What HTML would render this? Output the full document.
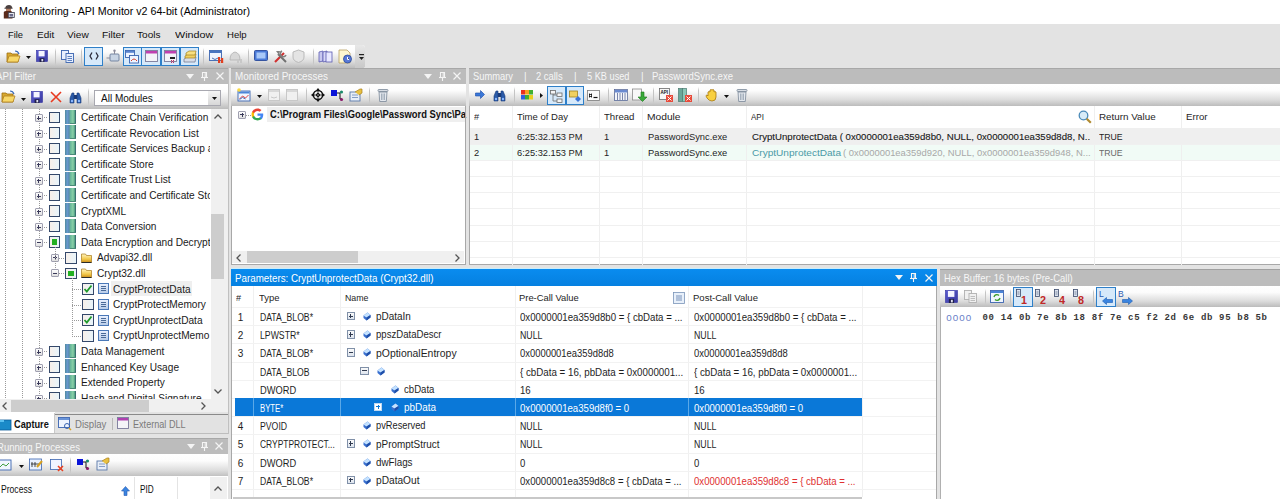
<!DOCTYPE html><html><head><meta charset="utf-8"><style>
html,body{margin:0;padding:0;width:1280px;height:499px;overflow:hidden;background:#e3e3e3;position:relative}
div{position:absolute}
.t{position:absolute;white-space:nowrap;transform-origin:0 0;font-family:"Liberation Sans",sans-serif}
svg{position:absolute;overflow:visible}
</style></head><body>
<div style="left:0px;top:0px;width:1280px;height:24px;background:#fff"></div>
<div class="t" style="left:18.7px;top:5.99px;font-size:11px;line-height:11px;color:#000;font-family:'Liberation Sans',sans-serif;transform:scaleX(0.9689);">Monitoring - API Monitor v2 64-bit (Administrator)</div>
<div style="left:0px;top:24px;width:1280px;height:44px;background:#e3e3e3"></div>
<div class="t" style="left:8.1px;top:30.10px;font-size:9.8px;line-height:9.8px;color:#111;font-family:'Liberation Sans',sans-serif;transform:scaleX(0.9499);">File</div>
<div class="t" style="left:36.6px;top:30.10px;font-size:9.8px;line-height:9.8px;color:#111;font-family:'Liberation Sans',sans-serif;transform:scaleX(1.0186);">Edit</div>
<div class="t" style="left:67px;top:30.10px;font-size:9.8px;line-height:9.8px;color:#111;font-family:'Liberation Sans',sans-serif;transform:scaleX(1.0349);">View</div>
<div class="t" style="left:101.6px;top:30.10px;font-size:9.8px;line-height:9.8px;color:#111;font-family:'Liberation Sans',sans-serif;transform:scaleX(1.0424);">Filter</div>
<div class="t" style="left:137px;top:30.10px;font-size:9.8px;line-height:9.8px;color:#111;font-family:'Liberation Sans',sans-serif;transform:scaleX(1.0272);">Tools</div>
<div class="t" style="left:174.7px;top:30.10px;font-size:9.8px;line-height:9.8px;color:#111;font-family:'Liberation Sans',sans-serif;transform:scaleX(1.0988);">Window</div>
<div class="t" style="left:226.5px;top:30.10px;font-size:9.8px;line-height:9.8px;color:#111;font-family:'Liberation Sans',sans-serif;transform:scaleX(0.9774);">Help</div>
<div style="left:0px;top:44.5px;width:364.5px;height:23px;background:linear-gradient(#ffffff,#fcfcfc 30%,#dcdcdc 72%,#bcbcbc);border-radius:0 3px 3px 0"></div>
<div style="left:355px;top:44.5px;width:9.5px;height:23px;background:linear-gradient(#e8e8e8,#c8c8c8);border-radius:0 3px 3px 0"></div>
<div style="left:0px;top:68px;width:228px;height:16px;background:#bcbcbc"></div>
<div class="t" style="left:-4px;top:71.13px;font-size:10.6px;line-height:10.6px;color:#f6f6f6;font-family:'Liberation Sans',sans-serif;transform:scaleX(0.9177);">API Filter</div>
<div style="left:0px;top:67.5px;width:228px;height:1px;background:#a8a8a8"></div>
<div style="left:0px;top:84px;width:228px;height:25px;background:linear-gradient(#ffffff,#fcfcfc 30%,#dcdcdc 72%,#bcbcbc)"></div>
<div style="left:0px;top:109px;width:210.5px;height:290px;background:#fff"></div>
<div style="left:210.5px;top:109px;width:17px;height:290px;background:#f0f0f0"></div>
<div style="left:211.3px;top:213.6px;width:12.5px;height:65px;background:#cdcdcd"></div>
<div style="left:227.5px;top:68px;width:1px;height:366px;background:#c0c0c0"></div>
<div style="left:0px;top:399px;width:210.5px;height:12.5px;background:#f0f0f0"></div>
<div style="left:11px;top:399.8px;width:137.5px;height:12px;background:#cdcdcd"></div>
<div style="left:210.5px;top:399px;width:17px;height:12.5px;background:#f0f0f0"></div>
<div style="left:0px;top:411.5px;width:228px;height:22px;background:#e4e4e4"></div>
<div style="left:0px;top:411.5px;width:55px;height:21px;background:#fff"></div>
<div style="left:0px;top:438.7px;width:228px;height:15px;background:#bcbcbc"></div>
<div class="t" style="left:-2.8px;top:441.53px;font-size:10.6px;line-height:10.6px;color:#f6f6f6;font-family:'Liberation Sans',sans-serif;transform:scaleX(0.9030);">Running Processes</div>
<div style="left:0px;top:438px;width:228px;height:1px;background:#a8a8a8"></div>
<div style="left:0px;top:453.7px;width:228px;height:23px;background:linear-gradient(#ffffff,#fcfcfc 30%,#dcdcdc 72%,#bcbcbc)"></div>
<div style="left:0px;top:476.4px;width:228px;height:23px;background:#fff"></div>
<div style="left:231px;top:68px;width:235px;height:16px;background:#bcbcbc"></div>
<div class="t" style="left:234.6px;top:71.13px;font-size:10.6px;line-height:10.6px;color:#f6f6f6;font-family:'Liberation Sans',sans-serif;transform:scaleX(0.9340);">Monitored Processes</div>
<div style="left:231px;top:67.5px;width:235px;height:1px;background:#a8a8a8"></div>
<div style="left:231px;top:84px;width:235px;height:22px;background:linear-gradient(#ffffff,#fcfcfc 30%,#dcdcdc 72%,#bcbcbc)"></div>
<div style="left:231px;top:106px;width:235px;height:159px;background:#fff;border-left:1px solid #a8a8a8;border-right:1px solid #a8a8a8;border-bottom:1px solid #a8a8a8;box-sizing:border-box"></div>
<div style="left:232px;top:250.8px;width:232px;height:12.6px;background:#f0f0f0"></div>
<div style="left:246.7px;top:250.8px;width:111.3px;height:12.6px;background:#cdcdcd"></div>
<div style="left:469px;top:68px;width:811px;height:16px;background:#bcbcbc"></div>
<div style="left:469px;top:67.5px;width:811px;height:1px;background:#a8a8a8"></div>
<div style="left:469px;top:84px;width:811px;height:22px;background:linear-gradient(#ffffff,#fcfcfc 30%,#dcdcdc 72%,#bcbcbc)"></div>
<div style="left:469px;top:106px;width:811px;height:159px;background:#fff;border-left:1px solid #a8a8a8;border-bottom:1px solid #a8a8a8;box-sizing:border-box"></div>
<div style="left:470px;top:128px;width:810px;height:16px;background:#efefef"></div>
<div style="left:470px;top:144px;width:810px;height:16px;background:#f1fbf6"></div>
<div style="left:231px;top:268px;width:706px;height:1px;background:#c8eefc"></div>
<div style="left:231px;top:269px;width:706px;height:16.5px;background:linear-gradient(#0a8cef,#0580e0)"></div>
<div class="t" style="left:235.2px;top:272.83px;font-size:10.6px;line-height:10.6px;color:#fff;font-family:'Liberation Sans',sans-serif;transform:scaleX(0.9232);">Parameters: CryptUnprotectData (Crypt32.dll)</div>
<div style="left:231px;top:285.5px;width:706px;height:213.5px;background:#fff;border-left:1px solid #a8a8a8;border-right:1px solid #a8a8a8;box-sizing:border-box"></div>
<div style="left:235.2px;top:398.6px;width:627px;height:18px;background:#0a78d8"></div>
<div style="left:233px;top:496.5px;width:629px;height:2.5px;background:#c8c8c8"></div>
<div style="left:940px;top:269.5px;width:340px;height:16px;background:#bcbcbc"></div>
<div class="t" style="left:944px;top:273.03px;font-size:10.6px;line-height:10.6px;color:#f6f6f6;font-family:'Liberation Sans',sans-serif;transform:scaleX(0.8936);">Hex Buffer: 16 bytes (Pre-Call)</div>
<div style="left:940px;top:269px;width:340px;height:1px;background:#a0a0a0"></div>
<div style="left:940px;top:285.6px;width:340px;height:21.5px;background:linear-gradient(#ffffff,#fcfcfc 30%,#dcdcdc 72%,#bcbcbc)"></div>
<div style="left:940px;top:307px;width:340px;height:192px;background:#fff;border-left:1px solid #b0b0b0;box-sizing:border-box"></div>
<div style="left:0;top:109px;width:210px;height:290px;overflow:hidden">
<div style="left:5px;top:0px;width:1px;height:290px;background:repeating-linear-gradient(#9a9a9a 0 1px,transparent 1px 2px)"></div>
<div style="left:22px;top:0px;width:1px;height:290px;background:repeating-linear-gradient(#9a9a9a 0 1px,transparent 1px 2px)"></div>
<div style="left:38.5px;top:0px;width:1px;height:290px;background:repeating-linear-gradient(#9a9a9a 0 1px,transparent 1px 2px)"></div>
<div style="left:110.5px;top:171.89999999999998px;width:81px;height:15px;background:#efefef"></div>
<div style="left:42px;top:8.299999999999997px;width:6px;height:1px;background:repeating-linear-gradient(90deg,#9a9a9a 0 1px,transparent 1px 2px)"></div>
<div style="left:34.9px;top:5.099999999999997px;width:8px;height:8px;background:linear-gradient(#fdfdfd,#e0e0e0);border:1px solid #a0a0b0;box-sizing:border-box;border-radius:1px"></div>
<div style="left:36.9px;top:8.599999999999998px;width:4px;height:1px;background:#3a3a5a"></div>
<div style="left:38.4px;top:7.099999999999997px;width:1px;height:4px;background:#3a3a5a"></div>
<div style="left:48.7px;top:2.599999999999997px;width:11.5px;height:11.5px;background:linear-gradient(90deg,#f8f0ea,#e8f4fa);border:1.2px solid #34486a;box-sizing:border-box"></div>
<div style="left:65px;top:0.7999999999999972px;width:10.8px;height:14px;background:linear-gradient(90deg,#4f8a9a,#6a9ad0 22%,#5a8ab0 40%,#6ab89a 55%,#8ad0a8 80%,#4a9a80);border-right:1px solid #3a7070;box-sizing:border-box"></div>
<div style="left:70px;top:13.799999999999997px;width:5.8px;height:1px;background:#4a8a78"></div>
<div class="t" style="left:80.6px;top:2.91px;font-size:10.5px;line-height:10.5px;color:#1a1a1a;font-family:'Liberation Sans',sans-serif;transform:scaleX(0.965);">Certificate Chain Verification</div>
<div style="left:42px;top:23.900000000000006px;width:6px;height:1px;background:repeating-linear-gradient(90deg,#9a9a9a 0 1px,transparent 1px 2px)"></div>
<div style="left:34.9px;top:20.700000000000006px;width:8px;height:8px;background:linear-gradient(#fdfdfd,#e0e0e0);border:1px solid #a0a0b0;box-sizing:border-box;border-radius:1px"></div>
<div style="left:36.9px;top:24.200000000000006px;width:4px;height:1px;background:#3a3a5a"></div>
<div style="left:38.4px;top:22.700000000000006px;width:1px;height:4px;background:#3a3a5a"></div>
<div style="left:48.7px;top:18.200000000000006px;width:11.5px;height:11.5px;background:linear-gradient(90deg,#f8f0ea,#e8f4fa);border:1.2px solid #34486a;box-sizing:border-box"></div>
<div style="left:65px;top:16.400000000000006px;width:10.8px;height:14px;background:linear-gradient(90deg,#4f8a9a,#6a9ad0 22%,#5a8ab0 40%,#6ab89a 55%,#8ad0a8 80%,#4a9a80);border-right:1px solid #3a7070;box-sizing:border-box"></div>
<div style="left:70px;top:29.400000000000006px;width:5.8px;height:1px;background:#4a8a78"></div>
<div class="t" style="left:80.6px;top:18.51px;font-size:10.5px;line-height:10.5px;color:#1a1a1a;font-family:'Liberation Sans',sans-serif;transform:scaleX(0.965);">Certificate Revocation List</div>
<div style="left:42px;top:39.5px;width:6px;height:1px;background:repeating-linear-gradient(90deg,#9a9a9a 0 1px,transparent 1px 2px)"></div>
<div style="left:34.9px;top:36.3px;width:8px;height:8px;background:linear-gradient(#fdfdfd,#e0e0e0);border:1px solid #a0a0b0;box-sizing:border-box;border-radius:1px"></div>
<div style="left:36.9px;top:39.8px;width:4px;height:1px;background:#3a3a5a"></div>
<div style="left:38.4px;top:38.3px;width:1px;height:4px;background:#3a3a5a"></div>
<div style="left:48.7px;top:33.8px;width:11.5px;height:11.5px;background:linear-gradient(90deg,#f8f0ea,#e8f4fa);border:1.2px solid #34486a;box-sizing:border-box"></div>
<div style="left:65px;top:32.0px;width:10.8px;height:14px;background:linear-gradient(90deg,#4f8a9a,#6a9ad0 22%,#5a8ab0 40%,#6ab89a 55%,#8ad0a8 80%,#4a9a80);border-right:1px solid #3a7070;box-sizing:border-box"></div>
<div style="left:70px;top:45.0px;width:5.8px;height:1px;background:#4a8a78"></div>
<div class="t" style="left:80.6px;top:34.11px;font-size:10.5px;line-height:10.5px;color:#1a1a1a;font-family:'Liberation Sans',sans-serif;transform:scaleX(0.965);">Certificate Services Backup an</div>
<div style="left:42px;top:55.099999999999994px;width:6px;height:1px;background:repeating-linear-gradient(90deg,#9a9a9a 0 1px,transparent 1px 2px)"></div>
<div style="left:34.9px;top:51.89999999999999px;width:8px;height:8px;background:linear-gradient(#fdfdfd,#e0e0e0);border:1px solid #a0a0b0;box-sizing:border-box;border-radius:1px"></div>
<div style="left:36.9px;top:55.39999999999999px;width:4px;height:1px;background:#3a3a5a"></div>
<div style="left:38.4px;top:53.89999999999999px;width:1px;height:4px;background:#3a3a5a"></div>
<div style="left:48.7px;top:49.39999999999999px;width:11.5px;height:11.5px;background:linear-gradient(90deg,#f8f0ea,#e8f4fa);border:1.2px solid #34486a;box-sizing:border-box"></div>
<div style="left:65px;top:47.599999999999994px;width:10.8px;height:14px;background:linear-gradient(90deg,#4f8a9a,#6a9ad0 22%,#5a8ab0 40%,#6ab89a 55%,#8ad0a8 80%,#4a9a80);border-right:1px solid #3a7070;box-sizing:border-box"></div>
<div style="left:70px;top:60.599999999999994px;width:5.8px;height:1px;background:#4a8a78"></div>
<div class="t" style="left:80.6px;top:49.71px;font-size:10.5px;line-height:10.5px;color:#1a1a1a;font-family:'Liberation Sans',sans-serif;transform:scaleX(0.965);">Certificate Store</div>
<div style="left:42px;top:70.69999999999999px;width:6px;height:1px;background:repeating-linear-gradient(90deg,#9a9a9a 0 1px,transparent 1px 2px)"></div>
<div style="left:34.9px;top:67.49999999999999px;width:8px;height:8px;background:linear-gradient(#fdfdfd,#e0e0e0);border:1px solid #a0a0b0;box-sizing:border-box;border-radius:1px"></div>
<div style="left:36.9px;top:70.99999999999999px;width:4px;height:1px;background:#3a3a5a"></div>
<div style="left:38.4px;top:69.49999999999999px;width:1px;height:4px;background:#3a3a5a"></div>
<div style="left:48.7px;top:64.99999999999999px;width:11.5px;height:11.5px;background:linear-gradient(90deg,#f8f0ea,#e8f4fa);border:1.2px solid #34486a;box-sizing:border-box"></div>
<div style="left:65px;top:63.19999999999999px;width:10.8px;height:14px;background:linear-gradient(90deg,#4f8a9a,#6a9ad0 22%,#5a8ab0 40%,#6ab89a 55%,#8ad0a8 80%,#4a9a80);border-right:1px solid #3a7070;box-sizing:border-box"></div>
<div style="left:70px;top:76.19999999999999px;width:5.8px;height:1px;background:#4a8a78"></div>
<div class="t" style="left:80.6px;top:65.31px;font-size:10.5px;line-height:10.5px;color:#1a1a1a;font-family:'Liberation Sans',sans-serif;transform:scaleX(0.965);">Certificate Trust List</div>
<div style="left:42px;top:86.30000000000001px;width:6px;height:1px;background:repeating-linear-gradient(90deg,#9a9a9a 0 1px,transparent 1px 2px)"></div>
<div style="left:34.9px;top:83.10000000000001px;width:8px;height:8px;background:linear-gradient(#fdfdfd,#e0e0e0);border:1px solid #a0a0b0;box-sizing:border-box;border-radius:1px"></div>
<div style="left:36.9px;top:86.60000000000001px;width:4px;height:1px;background:#3a3a5a"></div>
<div style="left:38.4px;top:85.10000000000001px;width:1px;height:4px;background:#3a3a5a"></div>
<div style="left:48.7px;top:80.60000000000001px;width:11.5px;height:11.5px;background:linear-gradient(90deg,#f8f0ea,#e8f4fa);border:1.2px solid #34486a;box-sizing:border-box"></div>
<div style="left:65px;top:78.80000000000001px;width:10.8px;height:14px;background:linear-gradient(90deg,#4f8a9a,#6a9ad0 22%,#5a8ab0 40%,#6ab89a 55%,#8ad0a8 80%,#4a9a80);border-right:1px solid #3a7070;box-sizing:border-box"></div>
<div style="left:70px;top:91.80000000000001px;width:5.8px;height:1px;background:#4a8a78"></div>
<div class="t" style="left:80.6px;top:80.91px;font-size:10.5px;line-height:10.5px;color:#1a1a1a;font-family:'Liberation Sans',sans-serif;transform:scaleX(0.965);">Certificate and Certificate Sto</div>
<div style="left:42px;top:101.89999999999998px;width:6px;height:1px;background:repeating-linear-gradient(90deg,#9a9a9a 0 1px,transparent 1px 2px)"></div>
<div style="left:34.9px;top:98.69999999999997px;width:8px;height:8px;background:linear-gradient(#fdfdfd,#e0e0e0);border:1px solid #a0a0b0;box-sizing:border-box;border-radius:1px"></div>
<div style="left:36.9px;top:102.19999999999997px;width:4px;height:1px;background:#3a3a5a"></div>
<div style="left:38.4px;top:100.69999999999997px;width:1px;height:4px;background:#3a3a5a"></div>
<div style="left:48.7px;top:96.19999999999997px;width:11.5px;height:11.5px;background:linear-gradient(90deg,#f8f0ea,#e8f4fa);border:1.2px solid #34486a;box-sizing:border-box"></div>
<div style="left:65px;top:94.39999999999998px;width:10.8px;height:14px;background:linear-gradient(90deg,#4f8a9a,#6a9ad0 22%,#5a8ab0 40%,#6ab89a 55%,#8ad0a8 80%,#4a9a80);border-right:1px solid #3a7070;box-sizing:border-box"></div>
<div style="left:70px;top:107.39999999999998px;width:5.8px;height:1px;background:#4a8a78"></div>
<div class="t" style="left:80.6px;top:96.51px;font-size:10.5px;line-height:10.5px;color:#1a1a1a;font-family:'Liberation Sans',sans-serif;transform:scaleX(0.965);">CryptXML</div>
<div style="left:42px;top:117.5px;width:6px;height:1px;background:repeating-linear-gradient(90deg,#9a9a9a 0 1px,transparent 1px 2px)"></div>
<div style="left:34.9px;top:114.3px;width:8px;height:8px;background:linear-gradient(#fdfdfd,#e0e0e0);border:1px solid #a0a0b0;box-sizing:border-box;border-radius:1px"></div>
<div style="left:36.9px;top:117.8px;width:4px;height:1px;background:#3a3a5a"></div>
<div style="left:38.4px;top:116.3px;width:1px;height:4px;background:#3a3a5a"></div>
<div style="left:48.7px;top:111.8px;width:11.5px;height:11.5px;background:linear-gradient(90deg,#f8f0ea,#e8f4fa);border:1.2px solid #34486a;box-sizing:border-box"></div>
<div style="left:65px;top:110.0px;width:10.8px;height:14px;background:linear-gradient(90deg,#4f8a9a,#6a9ad0 22%,#5a8ab0 40%,#6ab89a 55%,#8ad0a8 80%,#4a9a80);border-right:1px solid #3a7070;box-sizing:border-box"></div>
<div style="left:70px;top:123.0px;width:5.8px;height:1px;background:#4a8a78"></div>
<div class="t" style="left:80.6px;top:112.11px;font-size:10.5px;line-height:10.5px;color:#1a1a1a;font-family:'Liberation Sans',sans-serif;transform:scaleX(0.965);">Data Conversion</div>
<div style="left:42px;top:133.1px;width:6px;height:1px;background:repeating-linear-gradient(90deg,#9a9a9a 0 1px,transparent 1px 2px)"></div>
<div style="left:34.9px;top:129.9px;width:8px;height:8px;background:linear-gradient(#fdfdfd,#e0e0e0);border:1px solid #a0a0b0;box-sizing:border-box;border-radius:1px"></div>
<div style="left:36.9px;top:133.4px;width:4px;height:1px;background:#3a3a5a"></div>
<div style="left:48.7px;top:127.39999999999999px;width:11.5px;height:11.5px;background:linear-gradient(90deg,#f8f0ea,#e8f4fa);border:1.2px solid #34486a;box-sizing:border-box"></div>
<div style="left:51.7px;top:130.39999999999998px;width:5.5px;height:5.5px;background:#22b022"></div>
<div style="left:65px;top:125.6px;width:10.8px;height:14px;background:linear-gradient(90deg,#4f8a9a,#6a9ad0 22%,#5a8ab0 40%,#6ab89a 55%,#8ad0a8 80%,#4a9a80);border-right:1px solid #3a7070;box-sizing:border-box"></div>
<div style="left:70px;top:138.6px;width:5.8px;height:1px;background:#4a8a78"></div>
<div class="t" style="left:80.6px;top:127.71px;font-size:10.5px;line-height:10.5px;color:#1a1a1a;font-family:'Liberation Sans',sans-serif;transform:scaleX(0.965);">Data Encryption and Decrypti</div>
<div style="left:59px;top:148.7px;width:6px;height:1px;background:repeating-linear-gradient(90deg,#9a9a9a 0 1px,transparent 1px 2px)"></div>
<div style="left:51px;top:144.7px;width:8px;height:8px;background:linear-gradient(#fdfdfd,#e0e0e0);border:1px solid #a0a0b0;box-sizing:border-box;border-radius:1px"></div>
<div style="left:53px;top:148.2px;width:4px;height:1px;background:#3a3a5a"></div>
<div style="left:54.5px;top:146.7px;width:1px;height:4px;background:#3a3a5a"></div>
<div style="left:65px;top:143.0px;width:11.5px;height:11.5px;background:linear-gradient(90deg,#f8f0ea,#e8f4fa);border:1.2px solid #34486a;box-sizing:border-box"></div>
<svg style="left:81px;top:142.7px" width="11" height="11" viewBox="0 0 11 11"><defs><linearGradient id="fo" x1="0" y1="0" x2="0" y2="1"><stop offset="0" stop-color="#fff4c0"/><stop offset=".6" stop-color="#f2c84a"/><stop offset="1" stop-color="#c88a18"/></linearGradient></defs><path d="M0.5 2 h4 l1 1.5 h5 v7 h-10z" fill="url(#fo)" stroke="#a87818" stroke-width=".7"/><path d="M0.5 10.5 h10" stroke="#2a2a2a" stroke-width="1"/></svg>
<div class="t" style="left:96.8px;top:143.31px;font-size:10.5px;line-height:10.5px;color:#1a1a1a;font-family:'Liberation Sans',sans-serif;transform:scaleX(0.965);">Advapi32.dll</div>
<div style="left:59px;top:164.3px;width:6px;height:1px;background:repeating-linear-gradient(90deg,#9a9a9a 0 1px,transparent 1px 2px)"></div>
<div style="left:51px;top:160.3px;width:8px;height:8px;background:linear-gradient(#fdfdfd,#e0e0e0);border:1px solid #a0a0b0;box-sizing:border-box;border-radius:1px"></div>
<div style="left:53px;top:163.8px;width:4px;height:1px;background:#3a3a5a"></div>
<div style="left:65px;top:158.60000000000002px;width:11.5px;height:11.5px;background:linear-gradient(90deg,#f8f0ea,#e8f4fa);border:1.2px solid #34486a;box-sizing:border-box"></div>
<div style="left:68px;top:161.60000000000002px;width:5.5px;height:5.5px;background:#22b022"></div>
<svg style="left:81px;top:158.3px" width="11" height="11" viewBox="0 0 11 11"><defs><linearGradient id="fo" x1="0" y1="0" x2="0" y2="1"><stop offset="0" stop-color="#fff4c0"/><stop offset=".6" stop-color="#f2c84a"/><stop offset="1" stop-color="#c88a18"/></linearGradient></defs><path d="M0.5 2 h4 l1 1.5 h5 v7 h-10z" fill="url(#fo)" stroke="#a87818" stroke-width=".7"/><path d="M0.5 10.5 h10" stroke="#2a2a2a" stroke-width="1"/></svg>
<div class="t" style="left:96.8px;top:158.91px;font-size:10.5px;line-height:10.5px;color:#1a1a1a;font-family:'Liberation Sans',sans-serif;transform:scaleX(0.965);">Crypt32.dll</div>
<div style="left:72px;top:179.89999999999998px;width:10px;height:1px;background:repeating-linear-gradient(90deg,#9a9a9a 0 1px,transparent 1px 2px)"></div>
<div style="left:82px;top:174.2px;width:11.5px;height:11.5px;background:linear-gradient(90deg,#f8f0ea,#e8f4fa);border:1.2px solid #34486a;box-sizing:border-box"></div>
<svg style="left:82px;top:174.2px" width="11.5" height="11.5"><path d="M2.5 6 L4.8 8.5 L9.5 2.5" stroke="#1f9a2a" stroke-width="1.8" fill="none"/></svg>
<div style="left:98px;top:174.39999999999998px;width:11px;height:11px;background:linear-gradient(#e8f0ff,#b8cce8);border:1px solid #4a78b8;box-sizing:border-box"></div>
<div style="left:101px;top:177.39999999999998px;width:5px;height:1px;background:#4a6a98"></div>
<div style="left:101px;top:179.39999999999998px;width:5px;height:1px;background:#4a6a98"></div>
<div style="left:101px;top:181.39999999999998px;width:5px;height:1px;background:#4a6a98"></div>
<div class="t" style="left:113px;top:174.51px;font-size:10.5px;line-height:10.5px;color:#1a1a1a;font-family:'Liberation Sans',sans-serif;transform:scaleX(0.965);">CryptProtectData</div>
<div style="left:72px;top:195.5px;width:10px;height:1px;background:repeating-linear-gradient(90deg,#9a9a9a 0 1px,transparent 1px 2px)"></div>
<div style="left:82px;top:189.8px;width:11.5px;height:11.5px;background:linear-gradient(90deg,#f8f0ea,#e8f4fa);border:1.2px solid #34486a;box-sizing:border-box"></div>
<div style="left:98px;top:190.0px;width:11px;height:11px;background:linear-gradient(#e8f0ff,#b8cce8);border:1px solid #4a78b8;box-sizing:border-box"></div>
<div style="left:101px;top:193.0px;width:5px;height:1px;background:#4a6a98"></div>
<div style="left:101px;top:195.0px;width:5px;height:1px;background:#4a6a98"></div>
<div style="left:101px;top:197.0px;width:5px;height:1px;background:#4a6a98"></div>
<div class="t" style="left:113px;top:190.11px;font-size:10.5px;line-height:10.5px;color:#1a1a1a;font-family:'Liberation Sans',sans-serif;transform:scaleX(0.965);">CryptProtectMemory</div>
<div style="left:72px;top:211.09999999999997px;width:10px;height:1px;background:repeating-linear-gradient(90deg,#9a9a9a 0 1px,transparent 1px 2px)"></div>
<div style="left:82px;top:205.39999999999998px;width:11.5px;height:11.5px;background:linear-gradient(90deg,#f8f0ea,#e8f4fa);border:1.2px solid #34486a;box-sizing:border-box"></div>
<svg style="left:82px;top:205.39999999999998px" width="11.5" height="11.5"><path d="M2.5 6 L4.8 8.5 L9.5 2.5" stroke="#1f9a2a" stroke-width="1.8" fill="none"/></svg>
<div style="left:98px;top:205.59999999999997px;width:11px;height:11px;background:linear-gradient(#e8f0ff,#b8cce8);border:1px solid #4a78b8;box-sizing:border-box"></div>
<div style="left:101px;top:208.59999999999997px;width:5px;height:1px;background:#4a6a98"></div>
<div style="left:101px;top:210.59999999999997px;width:5px;height:1px;background:#4a6a98"></div>
<div style="left:101px;top:212.59999999999997px;width:5px;height:1px;background:#4a6a98"></div>
<div class="t" style="left:113px;top:205.71px;font-size:10.5px;line-height:10.5px;color:#1a1a1a;font-family:'Liberation Sans',sans-serif;transform:scaleX(0.965);">CryptUnprotectData</div>
<div style="left:72px;top:226.7px;width:10px;height:1px;background:repeating-linear-gradient(90deg,#9a9a9a 0 1px,transparent 1px 2px)"></div>
<div style="left:82px;top:221.0px;width:11.5px;height:11.5px;background:linear-gradient(90deg,#f8f0ea,#e8f4fa);border:1.2px solid #34486a;box-sizing:border-box"></div>
<div style="left:98px;top:221.2px;width:11px;height:11px;background:linear-gradient(#e8f0ff,#b8cce8);border:1px solid #4a78b8;box-sizing:border-box"></div>
<div style="left:101px;top:224.2px;width:5px;height:1px;background:#4a6a98"></div>
<div style="left:101px;top:226.2px;width:5px;height:1px;background:#4a6a98"></div>
<div style="left:101px;top:228.2px;width:5px;height:1px;background:#4a6a98"></div>
<div class="t" style="left:113px;top:221.31px;font-size:10.5px;line-height:10.5px;color:#1a1a1a;font-family:'Liberation Sans',sans-serif;transform:scaleX(0.965);">CryptUnprotectMemo</div>
<div style="left:42px;top:242.3px;width:6px;height:1px;background:repeating-linear-gradient(90deg,#9a9a9a 0 1px,transparent 1px 2px)"></div>
<div style="left:34.9px;top:239.10000000000002px;width:8px;height:8px;background:linear-gradient(#fdfdfd,#e0e0e0);border:1px solid #a0a0b0;box-sizing:border-box;border-radius:1px"></div>
<div style="left:36.9px;top:242.60000000000002px;width:4px;height:1px;background:#3a3a5a"></div>
<div style="left:38.4px;top:241.10000000000002px;width:1px;height:4px;background:#3a3a5a"></div>
<div style="left:48.7px;top:236.60000000000002px;width:11.5px;height:11.5px;background:linear-gradient(90deg,#f8f0ea,#e8f4fa);border:1.2px solid #34486a;box-sizing:border-box"></div>
<div style="left:65px;top:234.8px;width:10.8px;height:14px;background:linear-gradient(90deg,#4f8a9a,#6a9ad0 22%,#5a8ab0 40%,#6ab89a 55%,#8ad0a8 80%,#4a9a80);border-right:1px solid #3a7070;box-sizing:border-box"></div>
<div style="left:70px;top:247.8px;width:5.8px;height:1px;background:#4a8a78"></div>
<div class="t" style="left:80.6px;top:236.91px;font-size:10.5px;line-height:10.5px;color:#1a1a1a;font-family:'Liberation Sans',sans-serif;transform:scaleX(0.965);">Data Management</div>
<div style="left:42px;top:257.9px;width:6px;height:1px;background:repeating-linear-gradient(90deg,#9a9a9a 0 1px,transparent 1px 2px)"></div>
<div style="left:34.9px;top:254.7px;width:8px;height:8px;background:linear-gradient(#fdfdfd,#e0e0e0);border:1px solid #a0a0b0;box-sizing:border-box;border-radius:1px"></div>
<div style="left:36.9px;top:258.2px;width:4px;height:1px;background:#3a3a5a"></div>
<div style="left:38.4px;top:256.7px;width:1px;height:4px;background:#3a3a5a"></div>
<div style="left:48.7px;top:252.2px;width:11.5px;height:11.5px;background:linear-gradient(90deg,#f8f0ea,#e8f4fa);border:1.2px solid #34486a;box-sizing:border-box"></div>
<div style="left:65px;top:250.39999999999998px;width:10.8px;height:14px;background:linear-gradient(90deg,#4f8a9a,#6a9ad0 22%,#5a8ab0 40%,#6ab89a 55%,#8ad0a8 80%,#4a9a80);border-right:1px solid #3a7070;box-sizing:border-box"></div>
<div style="left:70px;top:263.4px;width:5.8px;height:1px;background:#4a8a78"></div>
<div class="t" style="left:80.6px;top:252.51px;font-size:10.5px;line-height:10.5px;color:#1a1a1a;font-family:'Liberation Sans',sans-serif;transform:scaleX(0.965);">Enhanced Key Usage</div>
<div style="left:42px;top:273.5px;width:6px;height:1px;background:repeating-linear-gradient(90deg,#9a9a9a 0 1px,transparent 1px 2px)"></div>
<div style="left:34.9px;top:270.3px;width:8px;height:8px;background:linear-gradient(#fdfdfd,#e0e0e0);border:1px solid #a0a0b0;box-sizing:border-box;border-radius:1px"></div>
<div style="left:36.9px;top:273.8px;width:4px;height:1px;background:#3a3a5a"></div>
<div style="left:38.4px;top:272.3px;width:1px;height:4px;background:#3a3a5a"></div>
<div style="left:48.7px;top:267.8px;width:11.5px;height:11.5px;background:linear-gradient(90deg,#f8f0ea,#e8f4fa);border:1.2px solid #34486a;box-sizing:border-box"></div>
<div style="left:65px;top:266.0px;width:10.8px;height:14px;background:linear-gradient(90deg,#4f8a9a,#6a9ad0 22%,#5a8ab0 40%,#6ab89a 55%,#8ad0a8 80%,#4a9a80);border-right:1px solid #3a7070;box-sizing:border-box"></div>
<div style="left:70px;top:279.0px;width:5.8px;height:1px;background:#4a8a78"></div>
<div class="t" style="left:80.6px;top:268.11px;font-size:10.5px;line-height:10.5px;color:#1a1a1a;font-family:'Liberation Sans',sans-serif;transform:scaleX(0.965);">Extended Property</div>
<div style="left:42px;top:289.1px;width:6px;height:1px;background:repeating-linear-gradient(90deg,#9a9a9a 0 1px,transparent 1px 2px)"></div>
<div style="left:34.9px;top:285.90000000000003px;width:8px;height:8px;background:linear-gradient(#fdfdfd,#e0e0e0);border:1px solid #a0a0b0;box-sizing:border-box;border-radius:1px"></div>
<div style="left:36.9px;top:289.40000000000003px;width:4px;height:1px;background:#3a3a5a"></div>
<div style="left:38.4px;top:287.90000000000003px;width:1px;height:4px;background:#3a3a5a"></div>
<div style="left:48.7px;top:283.40000000000003px;width:11.5px;height:11.5px;background:linear-gradient(90deg,#f8f0ea,#e8f4fa);border:1.2px solid #34486a;box-sizing:border-box"></div>
<div style="left:65px;top:281.6px;width:10.8px;height:14px;background:linear-gradient(90deg,#4f8a9a,#6a9ad0 22%,#5a8ab0 40%,#6ab89a 55%,#8ad0a8 80%,#4a9a80);border-right:1px solid #3a7070;box-sizing:border-box"></div>
<div style="left:70px;top:294.6px;width:5.8px;height:1px;background:#4a8a78"></div>
<div class="t" style="left:80.6px;top:283.71px;font-size:10.5px;line-height:10.5px;color:#1a1a1a;font-family:'Liberation Sans',sans-serif;transform:scaleX(0.965);">Hash and Digital Signature</div>
<div style="left:55px;top:138.1px;width:1px;height:22.200000000000017px;background:repeating-linear-gradient(#9a9a9a 0 1px,transparent 1px 2px)"></div>
<div style="left:72px;top:169.3px;width:1px;height:57.39999999999998px;background:repeating-linear-gradient(#9a9a9a 0 1px,transparent 1px 2px)"></div>
</div>
<div class="t" style="left:474px;top:112.39px;font-size:9.7px;line-height:9.7px;color:#1e1e1e;font-family:'Liberation Sans',sans-serif;transform:scaleX(0.95);">#</div>
<div class="t" style="left:516.5px;top:112.39px;font-size:9.7px;line-height:9.7px;color:#1e1e1e;font-family:'Liberation Sans',sans-serif;transform:scaleX(0.9822);">Time of Day</div>
<div class="t" style="left:603.75px;top:112.39px;font-size:9.7px;line-height:9.7px;color:#1e1e1e;font-family:'Liberation Sans',sans-serif;transform:scaleX(0.9924);">Thread</div>
<div class="t" style="left:647px;top:112.39px;font-size:9.7px;line-height:9.7px;color:#1e1e1e;font-family:'Liberation Sans',sans-serif;transform:scaleX(1.0562);">Module</div>
<div class="t" style="left:751.25px;top:112.39px;font-size:9.7px;line-height:9.7px;color:#1e1e1e;font-family:'Liberation Sans',sans-serif;transform:scaleX(0.8315);">API</div>
<div class="t" style="left:1098.7px;top:112.39px;font-size:9.7px;line-height:9.7px;color:#1e1e1e;font-family:'Liberation Sans',sans-serif;transform:scaleX(1.0144);">Return Value</div>
<div class="t" style="left:1185.5px;top:112.39px;font-size:9.7px;line-height:9.7px;color:#1e1e1e;font-family:'Liberation Sans',sans-serif;transform:scaleX(0.9974);">Error</div>
<div style="left:512px;top:106px;width:1px;height:159px;background:#efefef"></div>
<div style="left:599.3px;top:106px;width:1px;height:159px;background:#efefef"></div>
<div style="left:642.3px;top:106px;width:1px;height:159px;background:#efefef"></div>
<div style="left:746.3px;top:106px;width:1px;height:159px;background:#efefef"></div>
<div style="left:1093.8px;top:106px;width:1px;height:159px;background:#efefef"></div>
<div style="left:1180.5px;top:106px;width:1px;height:159px;background:#efefef"></div>
<div style="left:470px;top:143.51999999999998px;width:810px;height:1px;background:#f0f0f0"></div>
<div style="left:470px;top:159.74px;width:810px;height:1px;background:#f0f0f0"></div>
<div style="left:470px;top:175.95999999999998px;width:810px;height:1px;background:#f0f0f0"></div>
<div style="left:470px;top:192.18px;width:810px;height:1px;background:#f0f0f0"></div>
<div style="left:470px;top:208.39999999999998px;width:810px;height:1px;background:#f0f0f0"></div>
<div style="left:470px;top:224.62px;width:810px;height:1px;background:#f0f0f0"></div>
<div style="left:470px;top:240.83999999999997px;width:810px;height:1px;background:#f0f0f0"></div>
<div style="left:470px;top:257.06px;width:810px;height:1px;background:#f0f0f0"></div>
<div class="t" style="left:474px;top:132.09px;font-size:9.7px;line-height:9.7px;color:#1e1e1e;font-family:'Liberation Sans',sans-serif;transform:scaleX(0.96);">1</div>
<div class="t" style="left:474px;top:148.29px;font-size:9.7px;line-height:9.7px;color:#1e1e1e;font-family:'Liberation Sans',sans-serif;transform:scaleX(0.96);">2</div>
<div class="t" style="left:517px;top:132.09px;font-size:9.7px;line-height:9.7px;color:#1e1e1e;font-family:'Liberation Sans',sans-serif;transform:scaleX(0.9578);">6:25:32.153 PM</div>
<div class="t" style="left:517px;top:148.29px;font-size:9.7px;line-height:9.7px;color:#1e1e1e;font-family:'Liberation Sans',sans-serif;transform:scaleX(0.9578);">6:25:32.153 PM</div>
<div class="t" style="left:603.5px;top:132.09px;font-size:9.7px;line-height:9.7px;color:#1e1e1e;font-family:'Liberation Sans',sans-serif;transform:scaleX(0.96);">1</div>
<div class="t" style="left:603.5px;top:148.29px;font-size:9.7px;line-height:9.7px;color:#1e1e1e;font-family:'Liberation Sans',sans-serif;transform:scaleX(0.96);">1</div>
<div class="t" style="left:647.8px;top:132.09px;font-size:9.7px;line-height:9.7px;color:#1e1e1e;font-family:'Liberation Sans',sans-serif;transform:scaleX(0.9626);">PasswordSync.exe</div>
<div class="t" style="left:647.8px;top:148.29px;font-size:9.7px;line-height:9.7px;color:#1e1e1e;font-family:'Liberation Sans',sans-serif;transform:scaleX(0.9626);">PasswordSync.exe</div>
<div class="t" style="left:751.7px;top:132.09px;font-size:9.7px;line-height:9.7px;color:#1a1a1a;font-family:'Liberation Sans',sans-serif;transform:scaleX(0.9932);-webkit-text-stroke:.12px #1a1a1a;">CryptUnprotectData ( 0x0000001ea359d8b0, NULL, 0x0000001ea359d8d8, N..</div>
<div class="t" style="left:751.7px;top:148.29px;font-size:9.7px;line-height:9.7px;color:#4a9aa6;font-family:'Liberation Sans',sans-serif;transform:scaleX(1.0395);">CryptUnprotectData</div>
<div class="t" style="left:842.5px;top:148.29px;font-size:9.7px;line-height:9.7px;color:#a8a8a8;font-family:'Liberation Sans',sans-serif;transform:scaleX(0.9722);">( 0x0000001ea359d920, NULL, 0x0000001ea359d948, N...</div>
<div class="t" style="left:1099px;top:132.09px;font-size:9.7px;line-height:9.7px;color:#1e1e1e;font-family:'Liberation Sans',sans-serif;transform:scaleX(0.8976);">TRUE</div>
<div class="t" style="left:1099px;top:148.29px;font-size:9.7px;line-height:9.7px;color:#6a6a6a;font-family:'Liberation Sans',sans-serif;transform:scaleX(0.8976);">TRUE</div>
<svg style="left:1078px;top:110px" width="14" height="14"><circle cx="5.5" cy="5.5" r="4.3" fill="#d8ecf8" stroke="#4a8ab8" stroke-width="1.3"/><path d="M8.7 8.7 L12.8 12.8" stroke="#b08a30" stroke-width="2.2"/></svg>
<div class="t" style="left:473px;top:71.13px;font-size:10.6px;line-height:10.6px;color:#f6f6f6;font-family:'Liberation Sans',sans-serif;transform:scaleX(0.8820);">Summary</div>
<div class="t" style="left:523.5px;top:71.13px;font-size:10.6px;line-height:10.6px;color:#f6f6f6;font-family:'Liberation Sans',sans-serif;transform:scaleX(0.95);">|</div>
<div class="t" style="left:536px;top:71.13px;font-size:10.6px;line-height:10.6px;color:#f6f6f6;font-family:'Liberation Sans',sans-serif;transform:scaleX(0.8853);">2 calls</div>
<div class="t" style="left:573.5px;top:71.13px;font-size:10.6px;line-height:10.6px;color:#f6f6f6;font-family:'Liberation Sans',sans-serif;transform:scaleX(0.95);">|</div>
<div class="t" style="left:586.7px;top:71.13px;font-size:10.6px;line-height:10.6px;color:#f6f6f6;font-family:'Liberation Sans',sans-serif;transform:scaleX(0.8689);">5 KB used</div>
<div class="t" style="left:640.5px;top:71.13px;font-size:10.6px;line-height:10.6px;color:#f6f6f6;font-family:'Liberation Sans',sans-serif;transform:scaleX(0.95);">|</div>
<div class="t" style="left:651.5px;top:71.13px;font-size:10.6px;line-height:10.6px;color:#f6f6f6;font-family:'Liberation Sans',sans-serif;transform:scaleX(0.8986);">PasswordSync.exe</div>
<div style="left:267px;top:107px;width:197.5px;height:15px;background:#efefef"></div>
<div style="left:238.2px;top:110.5px;width:8px;height:8px;background:linear-gradient(#fdfdfd,#e0e0e0);border:1px solid #a0a0b0;box-sizing:border-box;border-radius:1px"></div>
<div style="left:240.2px;top:114.0px;width:4px;height:1px;background:#3a3a5a"></div>
<div style="left:241.7px;top:112.5px;width:1px;height:4px;background:#3a3a5a"></div>
<div style="left:246px;top:114.5px;width:5px;height:1px;background:repeating-linear-gradient(90deg,#9a9a9a 0 1px,transparent 1px 2px)"></div>
<svg style="left:251.4px;top:108px" width="13" height="13" viewBox="0 0 24 24"><path d="M22.6 12.3c0-.8-.1-1.5-.2-2.3H12v4.4h5.9c-.3 1.4-1 2.6-2.2 3.4v2.8h3.6c2.1-1.9 3.3-4.8 3.3-8.3z" fill="#4285F4"/><path d="M12 23c3 0 5.5-1 7.3-2.7l-3.6-2.8c-1 .7-2.2 1.1-3.7 1.1-2.9 0-5.3-1.9-6.2-4.5H2.1v2.9C3.9 20.6 7.7 23 12 23z" fill="#34A853"/><path d="M5.8 14.1c-.2-.7-.4-1.4-.4-2.1s.1-1.4.4-2.1V7H2.1C1.4 8.5 1 10.2 1 12s.4 3.5 1.1 5l3.7-2.9z" fill="#FBBC05"/><path d="M12 5.4c1.6 0 3.1.6 4.2 1.7l3.2-3.2C17.5 2.1 15 1 12 1 7.7 1 3.9 3.4 2.1 7l3.7 2.9C6.7 7.3 9.1 5.4 12 5.4z" fill="#EA4335"/></svg>
<div class="t" style="left:269.5px;top:108.91px;font-size:10.5px;line-height:10.5px;color:#111;font-family:'Liberation Sans',sans-serif;font-weight:bold;transform:scaleX(0.8933);">C:\Program Files\Google\Password Sync\Pa</div>
<div style="left:465px;top:106px;width:1px;height:145px;background:#a8a8a8"></div>
<svg style="left:5.5px;top:49.5px" width="15" height="13" viewBox="0 0 15 13"><path d="M1 3 h4 l1 1 h6 v8 H1z" fill="#d8a830" stroke="#a07010" stroke-width=".8"/><path d="M3 6 h11 l-2 6 H1z" fill="#f8d868" stroke="#b08020" stroke-width=".8"/><path d="M9 1 q3 0 4 3" stroke="#3a6ab8" stroke-width="1.2" fill="none"/></svg>
<svg style="left:25.5px;top:55.5px" width="5" height="3" viewBox="0 0 5 3"><path d="M0 0 L5 0 L2.5 3z" fill="#111"/></svg>
<svg style="left:36px;top:50px" width="12" height="12" viewBox="0 0 12 12"><defs><linearGradient id="fg" x1="0" y1="0" x2="1" y2="1"><stop offset="0" stop-color="#5a5ad0"/><stop offset="1" stop-color="#3a3aa0"/></linearGradient></defs><rect x=".5" y=".5" width="11" height="11" fill="url(#fg)" stroke="#3030a0" stroke-width=".6"/><rect x="2.6" y="1" width="6.0" height="5.4" fill="#f4f4ff"/><rect x="3.6" y="8.2" width="4.8" height="3.8" fill="#20204a"/><rect x="5.4" y="9.0" width="1.8" height="2.4" fill="#e0e0f0"/></svg>
<div style="left:55px;top:48px;width:1px;height:18px;background:linear-gradient(transparent,#c4c4c4 20%,#c4c4c4 80%,transparent)"></div>
<svg style="left:61px;top:50px" width="13" height="13" viewBox="0 0 13 13"><rect x=".5" y=".5" width="7" height="9" fill="#e8f0ff" stroke="#3a64b0" stroke-width=".9"/><rect x="5" y="3.5" width="7.5" height="9" fill="#e8f0ff" stroke="#3a64b0" stroke-width=".9"/><path d="M6.5 6.5h4.5M6.5 8.5h4.5M6.5 10.5h4.5" stroke="#3a64b0" stroke-width=".8"/></svg>
<div style="left:81px;top:48px;width:1px;height:18px;background:linear-gradient(transparent,#c4c4c4 20%,#c4c4c4 80%,transparent)"></div>
<div style="left:84.2px;top:47.3px;width:18.8px;height:18.3px;background:#d6e9fa;border:1.3px solid #2e7fc8;box-sizing:border-box"></div>
<svg style="left:89px;top:51.5px" width="10" height="8" viewBox="0 0 10 8"><path d="M3 0.5 L1 4 L3 7.5" stroke="#2a2a3a" stroke-width="1.3" fill="none"/><path d="M7 0.5 L9 4 L7 7.5" stroke="#2a2a3a" stroke-width="1.3" fill="none"/></svg>
<svg style="left:106px;top:49px" width="14" height="14" viewBox="0 0 14 14"><rect x="4" y="5" width="9" height="7" rx="1" fill="#c8d4e4" stroke="#6a7a98" stroke-width=".9"/><path d="M8.5 5V1.5M0.5 9h3.5" stroke="#8a8a9a" stroke-width="1"/><circle cx="8.5" cy="1.8" r="1.2" fill="#8a8a9a"/></svg>
<div style="left:122.6px;top:47.3px;width:19.2px;height:18.3px;background:#d6e9fa;border:1.3px solid #2e7fc8;box-sizing:border-box"></div>
<div style="left:141.4px;top:47.3px;width:19.2px;height:18.3px;background:#d6e9fa;border:1.3px solid #2e7fc8;box-sizing:border-box"></div>
<div style="left:160.6px;top:47.3px;width:19.2px;height:18.3px;background:#d6e9fa;border:1.3px solid #2e7fc8;box-sizing:border-box"></div>
<div style="left:179.8px;top:47.3px;width:19px;height:18.3px;background:#d6e9fa;border:1.3px solid #2e7fc8;box-sizing:border-box"></div>
<svg style="left:125px;top:49.5px" width="14" height="14" viewBox="0 0 14 14"><rect x=".5" y=".5" width="9" height="7" fill="#eef4ff" stroke="#3a64b0" stroke-width=".9"/><rect x="1" y="1" width="8" height="1.8" fill="#5a84d0"/><rect x="4.5" y="5.5" width="9" height="7.5" fill="#eef4ff" stroke="#3a64b0" stroke-width=".9"/><path d="M6 11 q3-4 6 0" stroke="#d04030" stroke-width="1" fill="none"/></svg>
<svg style="left:144.5px;top:50px" width="13" height="12" viewBox="0 0 13 12"><rect x=".5" y=".5" width="12" height="11" fill="#f4f4f8" stroke="#7a7a9a" stroke-width=".9"/><rect x="1" y="1" width="11" height="2.5" fill="#c040b0"/></svg>
<svg style="left:163.5px;top:50px" width="13" height="12" viewBox="0 0 13 12"><rect x=".5" y=".5" width="12" height="11" fill="#f4f4f8" stroke="#7a7a9a" stroke-width=".9"/><rect x="1" y="1" width="11" height="2.5" fill="#c040b0"/></svg>
<svg style="left:170px;top:57px" width="6" height="6" viewBox="0 0 6 6"><rect x="0" y="0" width="5" height="2" fill="#222"/><path d="M1 3 l3 3M4 3 l-3 3" stroke="#c03060" stroke-width="1"/></svg>
<svg style="left:182.5px;top:49.5px" width="14" height="14" viewBox="0 0 14 14"><path d="M1 9 l3-2 h9 l-1 5 H1z" fill="#d8dde8" stroke="#6a7088" stroke-width=".7"/><path d="M2 6 l3-2 h8 l-1 4 H2z" fill="#f0d060" stroke="#a08020" stroke-width=".7"/><path d="M3 3 l3-2 h7 l-1 4 H3z" fill="#f8e080" stroke="#a08020" stroke-width=".7"/></svg>
<div style="left:202.8px;top:48px;width:1px;height:18px;background:linear-gradient(transparent,#c4c4c4 20%,#c4c4c4 80%,transparent)"></div>
<svg style="left:209px;top:49.5px" width="15" height="14" viewBox="0 0 15 14"><rect x=".5" y=".5" width="12" height="10" fill="#f0f4ff" stroke="#3a64b0" stroke-width=".9"/><rect x="1" y="1" width="11" height="2" fill="#4a74c0"/><path d="M3 8 q3 3 6 0" stroke="#5070b0" fill="none"/><rect x="9" y="7" width="2.2" height="6" fill="#e04020"/><rect x="12" y="8" width="2.2" height="5" fill="#e04020"/></svg>
<svg style="left:228px;top:49.5px" width="15" height="14" viewBox="0 0 15 14"><path d="M2 10 q0-7 5-8 q5 1 5 8z" fill="#d8d8d8" stroke="#b0b0b0" stroke-width=".8"/><rect x="9" y="9" width="2" height="4" fill="#c8c8c8"/><rect x="12" y="9" width="2" height="4" fill="#c8c8c8"/></svg>
<div style="left:248px;top:48px;width:1px;height:18px;background:linear-gradient(transparent,#c4c4c4 20%,#c4c4c4 80%,transparent)"></div>
<svg style="left:254px;top:50px" width="14" height="12" viewBox="0 0 14 12"><rect x=".5" y=".5" width="13" height="10" rx="1" fill="#4a7ad8" stroke="#2a4a98" stroke-width=".9"/><rect x="2.5" y="2.5" width="9" height="6" fill="#a8c8f8"/></svg>
<svg style="left:273px;top:49px" width="15" height="15" viewBox="0 0 15 15"><path d="M2 13 L11 4" stroke="#d03030" stroke-width="2.2"/><path d="M13 13 L5 5" stroke="#707070" stroke-width="2"/><path d="M3 2 l4 0 l-1 4z" fill="#808080"/><path d="M9 2 a3 3 0 1 0 4 4" stroke="#808080" stroke-width="1.6" fill="none"/></svg>
<svg style="left:292px;top:49px" width="13" height="14" viewBox="0 0 13 14"><path d="M6.5 1 L12 3 V8 Q12 12 6.5 13.5 Q1 12 1 8 V3z" fill="#e4e4e4" stroke="#b4b4b4" stroke-width=".9"/></svg>
<div style="left:313px;top:48px;width:1px;height:18px;background:linear-gradient(transparent,#c4c4c4 20%,#c4c4c4 80%,transparent)"></div>
<svg style="left:318px;top:50px" width="15" height="13" viewBox="0 0 15 13"><path d="M1 2 l4-1 v10 l-4 1z" fill="#c8c8f0" stroke="#5a5ab0" stroke-width=".8"/><path d="M5 2 l4-1 v10 l-4 1z" fill="#d8d8f8" stroke="#5a5ab0" stroke-width=".8"/><rect x="8" y="2" width="6" height="10" fill="#e8e8ff" stroke="#5a5ab0" stroke-width=".8"/></svg>
<svg style="left:338px;top:48.5px" width="15" height="15" viewBox="0 0 15 15"><path d="M1 1 h8 l3 3 v10 H1z" fill="#fff8d0" stroke="#b8a060" stroke-width=".8"/><circle cx="9.5" cy="10" r="4" fill="#5a7ad8" stroke="#2a4a98" stroke-width=".8"/><path d="M9.5 8 v2.5 h1.5" stroke="#fff" stroke-width="1"/></svg>
<svg style="left:358.5px;top:54px" width="6" height="8" viewBox="0 0 6 8"><rect x="0" y="0" width="5" height="1.2" fill="#222"/><path d="M0 3 h5 l-2.5 3z" fill="#222"/></svg>
<svg style="left:186px;top:73.5px" width="8" height="5" viewBox="0 0 8 5"><path d="M0 0 h8 l-4 5z" fill="#f4f4f4"/></svg>
<svg style="left:201px;top:71.5px" width="7" height="9" viewBox="0 0 7 9"><path d="M1.5 0.5 h4 v5 h-4z" fill="none" stroke="#f4f4f4" stroke-width="1.1"/><path d="M0 5.5 h7" stroke="#f4f4f4" stroke-width="1.1"/><path d="M3.5 6 v3" stroke="#f4f4f4" stroke-width="1.1"/><path d="M4.2 1 v4.3" stroke="#f4f4f4" stroke-width="1"/></svg>
<svg style="left:215.5px;top:72px" width="8" height="8" viewBox="0 0 8 8"><path d="M0.5 0.5 L7.5 7.5 M7.5 0.5 L0.5 7.5" stroke="#f4f4f4" stroke-width="1.2"/></svg>
<svg style="left:424px;top:73.5px" width="8" height="5" viewBox="0 0 8 5"><path d="M0 0 h8 l-4 5z" fill="#f4f4f4"/></svg>
<svg style="left:439px;top:71.5px" width="7" height="9" viewBox="0 0 7 9"><path d="M1.5 0.5 h4 v5 h-4z" fill="none" stroke="#f4f4f4" stroke-width="1.1"/><path d="M0 5.5 h7" stroke="#f4f4f4" stroke-width="1.1"/><path d="M3.5 6 v3" stroke="#f4f4f4" stroke-width="1.1"/><path d="M4.2 1 v4.3" stroke="#f4f4f4" stroke-width="1"/></svg>
<svg style="left:452.5px;top:72px" width="8" height="8" viewBox="0 0 8 8"><path d="M0.5 0.5 L7.5 7.5 M7.5 0.5 L0.5 7.5" stroke="#f4f4f4" stroke-width="1.2"/></svg>
<svg style="left:187px;top:443.5px" width="8" height="5" viewBox="0 0 8 5"><path d="M0 0 h8 l-4 5z" fill="#f4f4f4"/></svg>
<svg style="left:201px;top:441.5px" width="7" height="9" viewBox="0 0 7 9"><path d="M1.5 0.5 h4 v5 h-4z" fill="none" stroke="#f4f4f4" stroke-width="1.1"/><path d="M0 5.5 h7" stroke="#f4f4f4" stroke-width="1.1"/><path d="M3.5 6 v3" stroke="#f4f4f4" stroke-width="1.1"/><path d="M4.2 1 v4.3" stroke="#f4f4f4" stroke-width="1"/></svg>
<svg style="left:215px;top:442px" width="8" height="8" viewBox="0 0 8 8"><path d="M0.5 0.5 L7.5 7.5 M7.5 0.5 L0.5 7.5" stroke="#f4f4f4" stroke-width="1.2"/></svg>
<svg style="left:895.4px;top:275.0px" width="8" height="5" viewBox="0 0 8 5"><path d="M0 0 h8 l-4 5z" fill="#f4f4f4"/></svg>
<svg style="left:910px;top:273.0px" width="7" height="9" viewBox="0 0 7 9"><path d="M1.5 0.5 h4 v5 h-4z" fill="none" stroke="#f4f4f4" stroke-width="1.1"/><path d="M0 5.5 h7" stroke="#f4f4f4" stroke-width="1.1"/><path d="M3.5 6 v3" stroke="#f4f4f4" stroke-width="1.1"/><path d="M4.2 1 v4.3" stroke="#f4f4f4" stroke-width="1"/></svg>
<svg style="left:924.5px;top:273.5px" width="8" height="8" viewBox="0 0 8 8"><path d="M0.5 0.5 L7.5 7.5 M7.5 0.5 L0.5 7.5" stroke="#f4f4f4" stroke-width="1.2"/></svg>
<svg style="left:0.5px;top:90px" width="15" height="13" viewBox="0 0 15 13"><path d="M1 3 h4 l1 1 h6 v8 H1z" fill="#d8a830" stroke="#a07010" stroke-width=".8"/><path d="M3 6 h11 l-2 6 H1z" fill="#f8d868" stroke="#b08020" stroke-width=".8"/><path d="M9 1 q3 0 4 3" stroke="#3a6ab8" stroke-width="1.2" fill="none"/></svg>
<svg style="left:21px;top:97.5px" width="5" height="3" viewBox="0 0 5 3"><path d="M0 0 L5 0 L2.5 3z" fill="#111"/></svg>
<svg style="left:31px;top:91px" width="12" height="12" viewBox="0 0 12 12"><defs><linearGradient id="fg" x1="0" y1="0" x2="1" y2="1"><stop offset="0" stop-color="#5a5ad0"/><stop offset="1" stop-color="#3a3aa0"/></linearGradient></defs><rect x=".5" y=".5" width="11" height="11" fill="url(#fg)" stroke="#3030a0" stroke-width=".6"/><rect x="2.6" y="1" width="6.0" height="5.4" fill="#f4f4ff"/><rect x="3.6" y="8.2" width="4.8" height="3.8" fill="#20204a"/><rect x="5.4" y="9.0" width="1.8" height="2.4" fill="#e0e0f0"/></svg>
<svg style="left:50px;top:91px" width="12" height="12" viewBox="0 0 12 12"><path d="M1 1 L11 11 M11 1 L1 11" stroke="#e83a20" stroke-width="1.6"/></svg>
<svg style="left:69px;top:91px" width="13" height="13" viewBox="0 0 13 13"><path d="M1 12 v-5 l2-5 h2 v10z M12 12 v-5 l-2-5 h-2 v10z" fill="#2a5aa8" stroke="#1a3a78" stroke-width=".6"/><rect x="5" y="4" width="3" height="4" fill="#1a3a78"/><circle cx="3" cy="10" r="1.2" fill="#8ab8ff"/><circle cx="10" cy="10" r="1.2" fill="#8ab8ff"/></svg>
<div style="left:88px;top:88px;width:1px;height:18px;background:linear-gradient(transparent,#c4c4c4 20%,#c4c4c4 80%,transparent)"></div>
<div style="left:94px;top:89.7px;width:126.5px;height:16.5px;background:#fff;border:1px solid #a8a8b0;box-sizing:border-box"></div>
<div style="left:208.4px;top:90.7px;width:11.2px;height:14.5px;background:linear-gradient(#f4f4f4,#d8d8d8)"></div>
<svg style="left:211.5px;top:96.5px" width="5" height="3" viewBox="0 0 5 3"><path d="M0 0 L5 0 L2.5 3z" fill="#111"/></svg>
<div class="t" style="left:100.6px;top:93.11px;font-size:10.5px;line-height:10.5px;color:#111;font-family:'Liberation Sans',sans-serif;transform:scaleX(0.9544);">All Modules</div>
<svg style="left:213.5px;top:114px" width="8" height="5" viewBox="0 0 8 5"><path d="M0.5 4.5 L4 1 L7.5 4.5" stroke="#555" stroke-width="1.3" fill="none"/></svg>
<svg style="left:213.5px;top:389px" width="8" height="5" viewBox="0 0 8 5"><path d="M0.5 0.5 L4 4 L7.5 0.5" stroke="#555" stroke-width="1.3" fill="none"/></svg>
<svg style="left:2px;top:401.5px" width="5" height="8" viewBox="0 0 5 8"><path d="M4.5 0.5 L1 4 L4.5 7.5" stroke="#555" stroke-width="1.3" fill="none"/></svg>
<svg style="left:200.5px;top:401.5px" width="5" height="8" viewBox="0 0 5 8"><path d="M0.5 0.5 L4 4 L0.5 7.5" stroke="#555" stroke-width="1.3" fill="none"/></svg>
<svg style="left:237px;top:88px" width="14" height="14" viewBox="0 0 14 14"><rect x="1" y="3" width="12" height="10" fill="#f0f6ff" stroke="#3a64b0" stroke-width=".9"/><rect x="1.5" y="3.5" width="11" height="2" fill="#4a84d8"/><path d="M2.5 11 l3-3 l3 2 l3-3" stroke="#e04040" stroke-width="1" fill="none"/><path d="M2.5 11.5 l3-2 l3 1.5" stroke="#3a64b0" stroke-width=".9" fill="none"/><circle cx="2" cy="2" r="1.8" fill="#f8d840"/></svg>
<svg style="left:256.5px;top:95px" width="5" height="3" viewBox="0 0 5 3"><path d="M0 0 L5 0 L2.5 3z" fill="#111"/></svg>
<svg style="left:267.5px;top:89px" width="12" height="12" viewBox="0 0 12 12"><rect x=".5" y=".5" width="11" height="11" fill="#f0f0f0" stroke="#c8c8c8"/><rect x="1" y="1" width="10" height="2" fill="#d8d8d8"/><path d="M3 8 q3 2 6 0" stroke="#c8c8c8" fill="none"/></svg>
<svg style="left:286px;top:89px" width="12" height="12" viewBox="0 0 12 12"><rect x=".5" y=".5" width="11" height="11" fill="#f0f0f0" stroke="#c8c8c8"/><rect x="1" y="1" width="10" height="2" fill="#d8d8d8"/></svg>
<div style="left:305.6px;top:87px;width:1px;height:17px;background:linear-gradient(transparent,#c4c4c4 20%,#c4c4c4 80%,transparent)"></div>
<svg style="left:311px;top:88px" width="14" height="14" viewBox="0 0 14 14"><circle cx="7" cy="7" r="4.6" fill="none" stroke="#111" stroke-width="1.5"/><circle cx="7" cy="7" r="1.6" fill="none" stroke="#111" stroke-width="1"/><path d="M7 0 L5 2.5 H9z M7 14 L5 11.5 H9z M0 7 L2.5 5 V9z M14 7 L11.5 5 V9z" fill="#111"/><path d="M7 2.5v9M2.5 7h9" stroke="#111" stroke-width=".8"/></svg>
<svg style="left:331px;top:89px" width="13" height="13" viewBox="0 0 13 13"><rect x="0" y="1" width="6" height="6" fill="#0a14d8"/><path d="M6 4 h3 v6 h2" stroke="#111" stroke-width="1" fill="none"/><circle cx="10.5" cy="3" r="1.6" fill="#1a8a6a"/><circle cx="10.5" cy="10.5" r="1.6" fill="#8a1a6a"/></svg>
<svg style="left:348.8px;top:88px" width="14" height="14" viewBox="0 0 14 14"><rect x="1" y="4" width="10" height="9" fill="#e8eef8" stroke="#5a78a8" stroke-width=".9"/><path d="M3 7h6M3 9.5h6" stroke="#6a88b8" stroke-width=".8"/><path d="M6 4 l5-3 h2 v4 l-3 2" fill="#e8c040" stroke="#a88020" stroke-width=".7"/></svg>
<div style="left:369.4px;top:87px;width:1px;height:17px;background:linear-gradient(transparent,#c4c4c4 20%,#c4c4c4 80%,transparent)"></div>
<svg style="left:376.5px;top:88px" width="12" height="14" viewBox="0 0 12 14"><rect x="1" y="1.5" width="10" height="2" rx=".8" fill="#d8dde4" stroke="#7a8898" stroke-width=".8"/><path d="M2 4 h8 l-.7 9.5 h-6.6z" fill="#e4e8ee" stroke="#7a8898" stroke-width=".8"/><path d="M4.5 5.5v6.5M6 5.5v6.5M7.5 5.5v6.5" stroke="#8a98a8" stroke-width=".7"/></svg>
<svg style="left:475px;top:90px" width="10" height="9" viewBox="0 0 10 9"><path d="M0.5 3 h5 v-2.5 l4 4 l-4 4 v-2.5 h-5z" fill="#3a78d8" stroke="#1a4aa8" stroke-width=".6"/></svg>
<svg style="left:493px;top:89px" width="13" height="13" viewBox="0 0 13 13"><path d="M1 12 v-5 l2-5 h2 v10z M12 12 v-5 l-2-5 h-2 v10z" fill="#2a5aa8" stroke="#1a3a78" stroke-width=".6"/><rect x="5" y="4" width="3" height="4" fill="#1a3a78"/><circle cx="3" cy="10" r="1.2" fill="#8ab8ff"/><circle cx="10" cy="10" r="1.2" fill="#8ab8ff"/></svg>
<div style="left:514px;top:87px;width:1px;height:17px;background:linear-gradient(transparent,#c4c4c4 20%,#c4c4c4 80%,transparent)"></div>
<svg style="left:521px;top:90px" width="12" height="10" viewBox="0 0 12 10"><rect x="0" y="0" width="4" height="4.5" fill="#e83020"/><rect x="4" y="0" width="4" height="4.5" fill="#f8a020"/><rect x="8" y="0" width="4" height="4.5" fill="#40b030"/><rect x="0" y="5" width="4" height="4.5" fill="#3060e0"/><rect x="4" y="5" width="4" height="4.5" fill="#40b030"/><rect x="8" y="5" width="4" height="4.5" fill="#e8d020"/></svg>
<svg style="left:540px;top:93px" width="3" height="5" viewBox="0 0 3 5"><path d="M0 0 L3 2.5 L0 5z" fill="#111"/></svg>
<div style="left:546.8px;top:85.6px;width:19px;height:19.4px;background:#d6e9fa;border:1.3px solid #2e7fc8;box-sizing:border-box"></div>
<div style="left:565.6px;top:85.6px;width:18.7px;height:19.4px;background:#d6e9fa;border:1.3px solid #2e7fc8;box-sizing:border-box"></div>
<svg style="left:550px;top:89.5px" width="13" height="13" viewBox="0 0 13 13"><rect x=".5" y=".5" width="5" height="3.5" fill="#f4f4f4" stroke="#6a6a6a" stroke-width=".8"/><rect x="7" y="3" width="5" height="3.5" fill="#f4f4f4" stroke="#6a6a6a" stroke-width=".8"/><rect x="7" y="9" width="5" height="3.5" fill="#f4f4f4" stroke="#6a6a6a" stroke-width=".8"/><path d="M3 4 v7 h4M3 5 h4" stroke="#6a6a6a" stroke-width=".8" fill="none"/></svg>
<svg style="left:568.5px;top:89.5px" width="13" height="13" viewBox="0 0 13 13"><rect x=".5" y="1" width="8" height="6" fill="#f0d060" stroke="#a08020" stroke-width=".8"/><path d="M9 6 l3 3 l-3 3 l-3-3z" fill="#3a74d8"/></svg>
<svg style="left:587px;top:90px" width="13" height="11" viewBox="0 0 13 11"><rect x=".5" y=".5" width="12" height="10" fill="#fafafa" stroke="#7a7a7a" stroke-width=".8"/><path d="M2.5 3.5v4M4.5 3.5v4M2 4.5h3M2 6.5h3" stroke="#111" stroke-width=".8"/><path d="M6.5 7.5h4" stroke="#111" stroke-width="1.2"/></svg>
<div style="left:607.8px;top:87px;width:1px;height:17px;background:linear-gradient(transparent,#c4c4c4 20%,#c4c4c4 80%,transparent)"></div>
<svg style="left:613.6px;top:89px" width="14" height="12" viewBox="0 0 14 12"><rect x=".5" y=".5" width="13" height="11" fill="#f4f6fa" stroke="#5a6a98" stroke-width=".8"/><rect x="1" y="1" width="12" height="2.5" fill="#6a8ad0"/><path d="M3.5 4v7M6 4v7M8.5 4v7M11 4v7" stroke="#5a6a98" stroke-width=".8"/></svg>
<svg style="left:632.4px;top:88px" width="14" height="14" viewBox="0 0 14 14"><rect x=".5" y="1" width="9" height="11" fill="#f8f8f8" stroke="#8a8a8a" stroke-width=".8"/><path d="M9 4 v5 h-3 l4.5 4.5 l4.5-4.5 h-3 v-5z" fill="#3aa83a" stroke="#1a781a" stroke-width=".6"/></svg>
<div style="left:653px;top:87px;width:1px;height:17px;background:linear-gradient(transparent,#c4c4c4 20%,#c4c4c4 80%,transparent)"></div>
<svg style="left:659px;top:88px" width="14" height="14" viewBox="0 0 14 14"><rect x=".5" y=".5" width="10" height="11" fill="#f8f8f8" stroke="#6a6a6a" stroke-width=".8"/><text x="1.5" y="5.5" font-size="4.5" font-family="Liberation Sans" font-weight="bold" fill="#111">API</text><rect x="7" y="7" width="7" height="7" fill="#e84a3a"/><path d="M8.5 8.5l4 4M12.5 8.5l-4 4" stroke="#fff" stroke-width="1"/></svg>
<svg style="left:678px;top:88px" width="14" height="14" viewBox="0 0 14 14"><rect x=".5" y=".5" width="4" height="13" fill="#6aa89a" stroke="#4a7a70" stroke-width=".7"/><rect x="4.5" y=".5" width="4" height="13" fill="#8ac8b8" stroke="#4a7a70" stroke-width=".7"/><rect x="7" y="7" width="7" height="7" fill="#e84a3a"/><path d="M8.5 8.5l4 4M12.5 8.5l-4 4" stroke="#fff" stroke-width="1"/></svg>
<div style="left:698px;top:87px;width:1px;height:17px;background:linear-gradient(transparent,#c4c4c4 20%,#c4c4c4 80%,transparent)"></div>
<svg style="left:706px;top:88px" width="12" height="14" viewBox="0 0 12 14"><path d="M2 8 V4 q1-1 2 0 V2 q1-1 2 0 v0 q1-1 2 0 v2 q1-1 2 0 v5 q0 4-4 4 q-3 0-5-3 l-1-2 q0-1 1-1z" fill="#f8d040" stroke="#a87810" stroke-width=".8"/></svg>
<svg style="left:724px;top:95px" width="5" height="3" viewBox="0 0 5 3"><path d="M0 0 L5 0 L2.5 3z" fill="#111"/></svg>
<svg style="left:735.5px;top:88px" width="12" height="14" viewBox="0 0 12 14"><rect x="1" y="1.5" width="10" height="2" rx=".8" fill="#d8dde4" stroke="#7a8898" stroke-width=".8"/><path d="M2 4 h8 l-.7 9.5 h-6.6z" fill="#e4e8ee" stroke="#7a8898" stroke-width=".8"/><path d="M4.5 5.5v6.5M6 5.5v6.5M7.5 5.5v6.5" stroke="#8a98a8" stroke-width=".7"/></svg>
<svg style="left:-1px;top:459px" width="13" height="13" viewBox="0 0 13 13"><rect x="0" y="1" width="12" height="10" fill="#f0f6ff" stroke="#3a64b0" stroke-width=".9"/><path d="M1 8 l3-3 l3 2 l3-3" stroke="#40a040" stroke-width="1" fill="none"/></svg>
<svg style="left:18.5px;top:465px" width="5" height="3" viewBox="0 0 5 3"><path d="M0 0 L5 0 L2.5 3z" fill="#111"/></svg>
<svg style="left:29px;top:458px" width="14" height="14" viewBox="0 0 14 14"><rect x=".5" y="1" width="12" height="11" fill="#e8f0ff" stroke="#3a64b0" stroke-width=".8"/><path d="M3 4v5M6 4v5M2 6h8" stroke="#222" stroke-width=".8"/><path d="M8 9 l5-6" stroke="#d8a020" stroke-width="2"/></svg>
<svg style="left:50px;top:459px" width="14" height="13" viewBox="0 0 14 13"><rect x=".5" y=".5" width="11" height="10" fill="#f0f4ff" stroke="#3a64b0" stroke-width=".8"/><path d="M8 7l5 5M13 7l-5 5" stroke="#e84020" stroke-width="1.6"/></svg>
<div style="left:70px;top:457px;width:1px;height:17px;background:linear-gradient(transparent,#c4c4c4 20%,#c4c4c4 80%,transparent)"></div>
<svg style="left:77px;top:458px" width="13" height="13" viewBox="0 0 13 13"><rect x="0" y="1" width="6" height="6" fill="#0a14d8"/><path d="M6 4 h3 v6 h2" stroke="#111" stroke-width="1" fill="none"/><circle cx="10.5" cy="3" r="1.6" fill="#1a8a6a"/><circle cx="10.5" cy="10.5" r="1.6" fill="#8a1a6a"/></svg>
<svg style="left:96px;top:457px" width="14" height="14" viewBox="0 0 14 14"><rect x="1" y="4" width="10" height="9" fill="#e8eef8" stroke="#5a78a8" stroke-width=".9"/><path d="M3 7h6M3 9.5h6" stroke="#6a88b8" stroke-width=".8"/><path d="M6 4 l5-3 h2 v4 l-3 2" fill="#e8c040" stroke="#a88020" stroke-width=".7"/></svg>
<div style="left:134px;top:477px;width:1px;height:22px;background:#e4e4e4"></div>
<div style="left:177.4px;top:477px;width:1px;height:22px;background:#e4e4e4"></div>
<div style="left:210px;top:477px;width:17px;height:22px;background:#f0f0f0"></div>
<svg style="left:213.5px;top:486px" width="8" height="5" viewBox="0 0 8 5"><path d="M0.5 4.5 L4 1 L7.5 4.5" stroke="#555" stroke-width="1.3" fill="none"/></svg>
<div class="t" style="left:1px;top:484.31px;font-size:10.5px;line-height:10.5px;color:#111;font-family:'Liberation Sans',sans-serif;transform:scaleX(0.8173);">Process</div>
<div class="t" style="left:139.7px;top:484.31px;font-size:10.5px;line-height:10.5px;color:#111;font-family:'Liberation Sans',sans-serif;transform:scaleX(0.7827);">PID</div>
<svg style="left:120.5px;top:486px" width="9" height="10" viewBox="0 0 9 10"><path d="M4.5 0.5 L8.5 5 H6 V9.5 H3 V5 H0.5z" fill="#3a84e0" stroke="#2a5ab0" stroke-width=".6"/></svg>
<div style="left:55px;top:413px;width:172px;height:20px;background:#e2e2e2"></div>
<div style="left:55px;top:414px;width:172.5px;height:1px;background:#8a8a8a"></div>
<div style="left:54px;top:413px;width:1px;height:20px;background:#c8c8c8"></div>
<div style="left:0px;top:433px;width:228px;height:1px;background:#bdbdbd"></div>
<svg style="left:-2px;top:418.5px" width="14" height="12" viewBox="0 0 14 12"><rect x="0" y="1" width="13" height="10" fill="#1a8ac8" stroke="#0a5a98" stroke-width=".8"/><rect x="0" y="1" width="6" height="2" fill="#5ac0f0"/></svg>
<div class="t" style="left:14.2px;top:419.11px;font-size:10.5px;line-height:10.5px;color:#111;font-family:'Liberation Sans',sans-serif;font-weight:bold;transform:scaleX(0.8772);">Capture</div>
<svg style="left:58px;top:416.5px" width="14" height="14" viewBox="0 0 14 14"><rect x=".5" y=".5" width="11" height="10" fill="#eef4ff" stroke="#3a64b0" stroke-width=".9"/><rect x="1" y="1" width="10" height="2" fill="#6a94d8"/><circle cx="9" cy="9" r="2.5" fill="none" stroke="#3a64b0" stroke-width="1"/><path d="M11 11 l2 2" stroke="#d8a020" stroke-width="1.5"/></svg>
<div class="t" style="left:75.4px;top:419.11px;font-size:10.5px;line-height:10.5px;color:#7a7a7a;font-family:'Liberation Sans',sans-serif;transform:scaleX(0.9120);">Display</div>
<div style="left:112px;top:418px;width:1px;height:12px;background:#b8b8b8"></div>
<svg style="left:117px;top:417px" width="12" height="12" viewBox="0 0 12 12"><rect x=".5" y=".5" width="11" height="11" fill="#f4f4f8" stroke="#7a7a9a" stroke-width=".9"/><rect x="1" y="1" width="10" height="2.5" fill="#b040b0"/></svg>
<div class="t" style="left:132.8px;top:419.11px;font-size:10.5px;line-height:10.5px;color:#7a7a7a;font-family:'Liberation Sans',sans-serif;transform:scaleX(0.8666);">External DLL</div>
<div class="t" style="left:236.4px;top:293.17px;font-size:9.6px;line-height:9.6px;color:#1e1e1e;font-family:'Liberation Sans',sans-serif;transform:scaleX(0.95);">#</div>
<div class="t" style="left:258.9px;top:293.17px;font-size:9.6px;line-height:9.6px;color:#1e1e1e;font-family:'Liberation Sans',sans-serif;transform:scaleX(0.9850);">Type</div>
<div class="t" style="left:345.2px;top:293.17px;font-size:9.6px;line-height:9.6px;color:#1e1e1e;font-family:'Liberation Sans',sans-serif;transform:scaleX(0.9177);">Name</div>
<div class="t" style="left:519.2px;top:293.17px;font-size:9.6px;line-height:9.6px;color:#1e1e1e;font-family:'Liberation Sans',sans-serif;transform:scaleX(0.9774);">Pre-Call Value</div>
<div class="t" style="left:693px;top:293.17px;font-size:9.6px;line-height:9.6px;color:#1e1e1e;font-family:'Liberation Sans',sans-serif;transform:scaleX(0.9931);">Post-Call Value</div>
<svg style="left:673px;top:291.5px" width="12" height="12" viewBox="0 0 12 12"><rect x=".5" y=".5" width="11" height="11" fill="#e8f0fa" stroke="#7a94b8" stroke-width=".8"/><path d="M3 4h6M3 6h6M3 8h6" stroke="#5a78a8" stroke-width=".8"/></svg>
<div style="left:253.3px;top:286px;width:1px;height:211px;background:#f0f0f0"></div>
<div style="left:340.2px;top:286px;width:1px;height:211px;background:#f0f0f0"></div>
<div style="left:514.6px;top:286px;width:1px;height:211px;background:#f0f0f0"></div>
<div style="left:687.9px;top:286px;width:1px;height:211px;background:#f0f0f0"></div>
<div style="left:861.7px;top:286px;width:1px;height:211px;background:#f0f0f0"></div>
<div style="left:232px;top:306.9px;width:704px;height:1px;background:#f2f2f2"></div>
<div style="left:232px;top:325.09999999999997px;width:704px;height:1px;background:#f2f2f2"></div>
<div style="left:232px;top:343.29999999999995px;width:704px;height:1px;background:#f2f2f2"></div>
<div style="left:232px;top:361.5px;width:704px;height:1px;background:#f2f2f2"></div>
<div style="left:232px;top:379.7px;width:704px;height:1px;background:#f2f2f2"></div>
<div style="left:232px;top:397.9px;width:704px;height:1px;background:#f2f2f2"></div>
<div style="left:232px;top:416.09999999999997px;width:704px;height:1px;background:#f2f2f2"></div>
<div style="left:232px;top:434.29999999999995px;width:704px;height:1px;background:#f2f2f2"></div>
<div style="left:232px;top:452.5px;width:704px;height:1px;background:#f2f2f2"></div>
<div style="left:232px;top:470.69999999999993px;width:704px;height:1px;background:#f2f2f2"></div>
<div style="left:232px;top:488.9px;width:704px;height:1px;background:#f2f2f2"></div>
<div class="t" style="left:237.8px;top:313.04px;font-size:10px;line-height:10px;color:#1e1e1e;font-family:'Liberation Sans',sans-serif;transform:scaleX(1.0);">1</div>
<div class="t" style="left:259.5px;top:313.04px;font-size:10px;line-height:10px;color:#1e1e1e;font-family:'Liberation Sans',sans-serif;transform:scaleX(0.8643);">DATA_BLOB*</div>
<div style="left:346.6px;top:311.9px;width:8.5px;height:8.5px;background:linear-gradient(#fafafa,#dde4ee);border:1px solid #8090a8;box-sizing:border-box"></div>
<div style="left:348.6px;top:315.59999999999997px;width:4.5px;height:1px;background:#303a50"></div>
<div style="left:350.3px;top:313.9px;width:1px;height:4.5px;background:#303a50"></div>
<svg style="left:362.8px;top:311.9px" width="8" height="9" viewBox="0 0 8 9"><path d="M0.5 3.5 L4.5 0.5 L7.5 3 L7.5 5.5 L3.5 8.5 L0.5 6z" fill="#3a70d0"/><path d="M0.5 3.5 L4.5 0.5 L7.5 3 L3.5 5.5z" fill="#c4e2ff"/><path d="M3.5 5.5 L7.5 3 L7.5 5.5 L3.5 8.5z" fill="#1f4fa8"/></svg>
<div class="t" style="left:375.7px;top:312.24px;font-size:10px;line-height:10px;color:#1e1e1e;font-family:'Liberation Sans',sans-serif;transform:scaleX(0.9964);">pDataIn</div>
<div class="t" style="left:519.7px;top:313.04px;font-size:10px;line-height:10px;color:#1e1e1e;font-family:'Liberation Sans',sans-serif;transform:scaleX(0.9645);">0x0000001ea359d8b0 = { cbData = ...</div>
<div class="t" style="left:693.5px;top:313.04px;font-size:10px;line-height:10px;color:#1e1e1e;font-family:'Liberation Sans',sans-serif;transform:scaleX(0.9645);">0x0000001ea359d8b0 = { cbData = ...</div>
<div class="t" style="left:237.8px;top:331.24px;font-size:10px;line-height:10px;color:#1e1e1e;font-family:'Liberation Sans',sans-serif;transform:scaleX(1.0);">2</div>
<div class="t" style="left:259.5px;top:331.24px;font-size:10px;line-height:10px;color:#1e1e1e;font-family:'Liberation Sans',sans-serif;transform:scaleX(0.8691);">LPWSTR*</div>
<div style="left:346.6px;top:330.09999999999997px;width:8.5px;height:8.5px;background:linear-gradient(#fafafa,#dde4ee);border:1px solid #8090a8;box-sizing:border-box"></div>
<div style="left:348.6px;top:333.79999999999995px;width:4.5px;height:1px;background:#303a50"></div>
<div style="left:350.3px;top:332.09999999999997px;width:1px;height:4.5px;background:#303a50"></div>
<svg style="left:362.8px;top:330.09999999999997px" width="8" height="9" viewBox="0 0 8 9"><path d="M0.5 3.5 L4.5 0.5 L7.5 3 L7.5 5.5 L3.5 8.5 L0.5 6z" fill="#3a70d0"/><path d="M0.5 3.5 L4.5 0.5 L7.5 3 L3.5 5.5z" fill="#c4e2ff"/><path d="M3.5 5.5 L7.5 3 L7.5 5.5 L3.5 8.5z" fill="#1f4fa8"/></svg>
<div class="t" style="left:375.7px;top:330.44px;font-size:10px;line-height:10px;color:#1e1e1e;font-family:'Liberation Sans',sans-serif;transform:scaleX(0.9581);">ppszDataDescr</div>
<div class="t" style="left:519.7px;top:331.24px;font-size:10px;line-height:10px;color:#1e1e1e;font-family:'Liberation Sans',sans-serif;transform:scaleX(0.8761);">NULL</div>
<div class="t" style="left:693.5px;top:331.24px;font-size:10px;line-height:10px;color:#1e1e1e;font-family:'Liberation Sans',sans-serif;transform:scaleX(0.8761);">NULL</div>
<div class="t" style="left:237.8px;top:349.44px;font-size:10px;line-height:10px;color:#1e1e1e;font-family:'Liberation Sans',sans-serif;transform:scaleX(1.0);">3</div>
<div class="t" style="left:259.5px;top:349.44px;font-size:10px;line-height:10px;color:#1e1e1e;font-family:'Liberation Sans',sans-serif;transform:scaleX(0.8643);">DATA_BLOB*</div>
<div style="left:346.6px;top:348.29999999999995px;width:8.5px;height:8.5px;background:linear-gradient(#fafafa,#dde4ee);border:1px solid #8090a8;box-sizing:border-box"></div>
<div style="left:348.6px;top:351.99999999999994px;width:4.5px;height:1px;background:#303a50"></div>
<svg style="left:362.8px;top:348.29999999999995px" width="8" height="9" viewBox="0 0 8 9"><path d="M0.5 3.5 L4.5 0.5 L7.5 3 L7.5 5.5 L3.5 8.5 L0.5 6z" fill="#3a70d0"/><path d="M0.5 3.5 L4.5 0.5 L7.5 3 L3.5 5.5z" fill="#c4e2ff"/><path d="M3.5 5.5 L7.5 3 L7.5 5.5 L3.5 8.5z" fill="#1f4fa8"/></svg>
<div class="t" style="left:375.7px;top:348.63px;font-size:10px;line-height:10px;color:#1e1e1e;font-family:'Liberation Sans',sans-serif;transform:scaleX(1.0431);">pOptionalEntropy</div>
<div class="t" style="left:519.7px;top:349.44px;font-size:10px;line-height:10px;color:#1e1e1e;font-family:'Liberation Sans',sans-serif;transform:scaleX(0.9412);">0x0000001ea359d8d8</div>
<div class="t" style="left:693.5px;top:349.44px;font-size:10px;line-height:10px;color:#1e1e1e;font-family:'Liberation Sans',sans-serif;transform:scaleX(0.9412);">0x0000001ea359d8d8</div>
<div class="t" style="left:259.5px;top:367.64px;font-size:10px;line-height:10px;color:#1e1e1e;font-family:'Liberation Sans',sans-serif;transform:scaleX(0.8637);">DATA_BLOB</div>
<div style="left:360.2px;top:366.5px;width:8.5px;height:8.5px;background:linear-gradient(#fafafa,#dde4ee);border:1px solid #8090a8;box-sizing:border-box"></div>
<div style="left:362.2px;top:370.2px;width:4.5px;height:1px;background:#303a50"></div>
<svg style="left:377px;top:366.5px" width="8" height="9" viewBox="0 0 8 9"><path d="M0.5 3.5 L4.5 0.5 L7.5 3 L7.5 5.5 L3.5 8.5 L0.5 6z" fill="#3a70d0"/><path d="M0.5 3.5 L4.5 0.5 L7.5 3 L3.5 5.5z" fill="#c4e2ff"/><path d="M3.5 5.5 L7.5 3 L7.5 5.5 L3.5 8.5z" fill="#1f4fa8"/></svg>
<div class="t" style="left:519.7px;top:367.64px;font-size:10px;line-height:10px;color:#1e1e1e;font-family:'Liberation Sans',sans-serif;transform:scaleX(0.9752);">{ cbData = 16, pbData = 0x0000001...</div>
<div class="t" style="left:693.5px;top:367.64px;font-size:10px;line-height:10px;color:#1e1e1e;font-family:'Liberation Sans',sans-serif;transform:scaleX(0.9752);">{ cbData = 16, pbData = 0x0000001...</div>
<div class="t" style="left:259.5px;top:385.84px;font-size:10px;line-height:10px;color:#1e1e1e;font-family:'Liberation Sans',sans-serif;transform:scaleX(0.9284);">DWORD</div>
<svg style="left:391px;top:384.7px" width="8" height="9" viewBox="0 0 8 9"><path d="M0.5 3.5 L4.5 0.5 L7.5 3 L7.5 5.5 L3.5 8.5 L0.5 6z" fill="#3a70d0"/><path d="M0.5 3.5 L4.5 0.5 L7.5 3 L3.5 5.5z" fill="#c4e2ff"/><path d="M3.5 5.5 L7.5 3 L7.5 5.5 L3.5 8.5z" fill="#1f4fa8"/></svg>
<div class="t" style="left:404px;top:385.04px;font-size:10px;line-height:10px;color:#1e1e1e;font-family:'Liberation Sans',sans-serif;transform:scaleX(0.9594);">cbData</div>
<div class="t" style="left:519.7px;top:385.84px;font-size:10px;line-height:10px;color:#1e1e1e;font-family:'Liberation Sans',sans-serif;transform:scaleX(0.9619);">16</div>
<div class="t" style="left:693.5px;top:385.84px;font-size:10px;line-height:10px;color:#1e1e1e;font-family:'Liberation Sans',sans-serif;transform:scaleX(0.9619);">16</div>
<div style="left:235.2px;top:398.0px;width:627px;height:18px;background:#0a78d8"></div>
<div style="left:253.3px;top:398.0px;width:1px;height:18px;background:#5aa8e8"></div>
<div style="left:340.2px;top:398.0px;width:1px;height:18px;background:#5aa8e8"></div>
<div style="left:514.6px;top:398.0px;width:1px;height:18px;background:#5aa8e8"></div>
<div style="left:687.9px;top:398.0px;width:1px;height:18px;background:#5aa8e8"></div>
<div class="t" style="left:259.5px;top:404.04px;font-size:10px;line-height:10px;color:#fff;font-family:'Liberation Sans',sans-serif;transform:scaleX(0.7764);">BYTE*</div>
<div style="left:374.4px;top:402.9px;width:8px;height:8px;background:#fff;border:1px solid #c0d8f0;box-sizing:border-box"></div>
<div style="left:376.4px;top:406.4px;width:4px;height:1px;background:#0a78d8"></div>
<div style="left:377.9px;top:404.9px;width:1px;height:4px;background:#0a78d8"></div>
<svg style="left:391px;top:402.9px" width="8" height="9" viewBox="0 0 8 9"><path d="M0.5 3.5 L4.5 0.5 L7.5 3 L7.5 5.5 L3.5 8.5 L0.5 6z" fill="#3a70d0"/><path d="M0.5 3.5 L4.5 0.5 L7.5 3 L3.5 5.5z" fill="#c4e2ff"/><path d="M3.5 5.5 L7.5 3 L7.5 5.5 L3.5 8.5z" fill="#1f4fa8"/></svg>
<div class="t" style="left:404px;top:403.24px;font-size:10px;line-height:10px;color:#fff;font-family:'Liberation Sans',sans-serif;transform:scaleX(0.9923);">pbData</div>
<div class="t" style="left:519.7px;top:404.04px;font-size:10px;line-height:10px;color:#fff;font-family:'Liberation Sans',sans-serif;transform:scaleX(0.9602);">0x0000001ea359d8f0 = 0</div>
<div class="t" style="left:693.5px;top:404.04px;font-size:10px;line-height:10px;color:#fff;font-family:'Liberation Sans',sans-serif;transform:scaleX(0.9602);">0x0000001ea359d8f0 = 0</div>
<div class="t" style="left:237.8px;top:422.24px;font-size:10px;line-height:10px;color:#1e1e1e;font-family:'Liberation Sans',sans-serif;transform:scaleX(1.0);">4</div>
<div class="t" style="left:259.5px;top:422.24px;font-size:10px;line-height:10px;color:#1e1e1e;font-family:'Liberation Sans',sans-serif;transform:scaleX(0.8709);">PVOID</div>
<svg style="left:362.8px;top:421.09999999999997px" width="8" height="9" viewBox="0 0 8 9"><path d="M0.5 3.5 L4.5 0.5 L7.5 3 L7.5 5.5 L3.5 8.5 L0.5 6z" fill="#3a70d0"/><path d="M0.5 3.5 L4.5 0.5 L7.5 3 L3.5 5.5z" fill="#c4e2ff"/><path d="M3.5 5.5 L7.5 3 L7.5 5.5 L3.5 8.5z" fill="#1f4fa8"/></svg>
<div class="t" style="left:375.7px;top:421.44px;font-size:10px;line-height:10px;color:#1e1e1e;font-family:'Liberation Sans',sans-serif;transform:scaleX(0.9276);">pvReserved</div>
<div class="t" style="left:519.7px;top:422.24px;font-size:10px;line-height:10px;color:#1e1e1e;font-family:'Liberation Sans',sans-serif;transform:scaleX(0.8761);">NULL</div>
<div class="t" style="left:693.5px;top:422.24px;font-size:10px;line-height:10px;color:#1e1e1e;font-family:'Liberation Sans',sans-serif;transform:scaleX(0.8761);">NULL</div>
<div class="t" style="left:237.8px;top:440.44px;font-size:10px;line-height:10px;color:#1e1e1e;font-family:'Liberation Sans',sans-serif;transform:scaleX(1.0);">5</div>
<div class="t" style="left:259.5px;top:440.44px;font-size:10px;line-height:10px;color:#1e1e1e;font-family:'Liberation Sans',sans-serif;transform:scaleX(0.8431);">CRYPTPROTECT...</div>
<div style="left:346.6px;top:439.29999999999995px;width:8.5px;height:8.5px;background:linear-gradient(#fafafa,#dde4ee);border:1px solid #8090a8;box-sizing:border-box"></div>
<div style="left:348.6px;top:442.99999999999994px;width:4.5px;height:1px;background:#303a50"></div>
<div style="left:350.3px;top:441.29999999999995px;width:1px;height:4.5px;background:#303a50"></div>
<svg style="left:362.8px;top:439.29999999999995px" width="8" height="9" viewBox="0 0 8 9"><path d="M0.5 3.5 L4.5 0.5 L7.5 3 L7.5 5.5 L3.5 8.5 L0.5 6z" fill="#3a70d0"/><path d="M0.5 3.5 L4.5 0.5 L7.5 3 L3.5 5.5z" fill="#c4e2ff"/><path d="M3.5 5.5 L7.5 3 L7.5 5.5 L3.5 8.5z" fill="#1f4fa8"/></svg>
<div class="t" style="left:375.7px;top:439.63px;font-size:10px;line-height:10px;color:#1e1e1e;font-family:'Liberation Sans',sans-serif;transform:scaleX(0.9935);">pPromptStruct</div>
<div class="t" style="left:519.7px;top:440.44px;font-size:10px;line-height:10px;color:#1e1e1e;font-family:'Liberation Sans',sans-serif;transform:scaleX(0.8761);">NULL</div>
<div class="t" style="left:693.5px;top:440.44px;font-size:10px;line-height:10px;color:#1e1e1e;font-family:'Liberation Sans',sans-serif;transform:scaleX(0.8761);">NULL</div>
<div class="t" style="left:237.8px;top:458.64px;font-size:10px;line-height:10px;color:#1e1e1e;font-family:'Liberation Sans',sans-serif;transform:scaleX(1.0);">6</div>
<div class="t" style="left:259.5px;top:458.64px;font-size:10px;line-height:10px;color:#1e1e1e;font-family:'Liberation Sans',sans-serif;transform:scaleX(0.9284);">DWORD</div>
<svg style="left:362.8px;top:457.5px" width="8" height="9" viewBox="0 0 8 9"><path d="M0.5 3.5 L4.5 0.5 L7.5 3 L7.5 5.5 L3.5 8.5 L0.5 6z" fill="#3a70d0"/><path d="M0.5 3.5 L4.5 0.5 L7.5 3 L3.5 5.5z" fill="#c4e2ff"/><path d="M3.5 5.5 L7.5 3 L7.5 5.5 L3.5 8.5z" fill="#1f4fa8"/></svg>
<div class="t" style="left:375.7px;top:457.84px;font-size:10px;line-height:10px;color:#1e1e1e;font-family:'Liberation Sans',sans-serif;transform:scaleX(0.9802);">dwFlags</div>
<div class="t" style="left:519.7px;top:458.64px;font-size:10px;line-height:10px;color:#1e1e1e;font-family:'Liberation Sans',sans-serif;transform:scaleX(0.9529);">0</div>
<div class="t" style="left:693.5px;top:458.64px;font-size:10px;line-height:10px;color:#1e1e1e;font-family:'Liberation Sans',sans-serif;transform:scaleX(0.9529);">0</div>
<div class="t" style="left:237.8px;top:476.83px;font-size:10px;line-height:10px;color:#1e1e1e;font-family:'Liberation Sans',sans-serif;transform:scaleX(1.0);">7</div>
<div class="t" style="left:259.5px;top:476.83px;font-size:10px;line-height:10px;color:#1e1e1e;font-family:'Liberation Sans',sans-serif;transform:scaleX(0.8643);">DATA_BLOB*</div>
<div style="left:346.6px;top:475.69999999999993px;width:8.5px;height:8.5px;background:linear-gradient(#fafafa,#dde4ee);border:1px solid #8090a8;box-sizing:border-box"></div>
<div style="left:348.6px;top:479.3999999999999px;width:4.5px;height:1px;background:#303a50"></div>
<div style="left:350.3px;top:477.69999999999993px;width:1px;height:4.5px;background:#303a50"></div>
<svg style="left:362.8px;top:475.69999999999993px" width="8" height="9" viewBox="0 0 8 9"><path d="M0.5 3.5 L4.5 0.5 L7.5 3 L7.5 5.5 L3.5 8.5 L0.5 6z" fill="#3a70d0"/><path d="M0.5 3.5 L4.5 0.5 L7.5 3 L3.5 5.5z" fill="#c4e2ff"/><path d="M3.5 5.5 L7.5 3 L7.5 5.5 L3.5 8.5z" fill="#1f4fa8"/></svg>
<div class="t" style="left:375.7px;top:476.03px;font-size:10px;line-height:10px;color:#1e1e1e;font-family:'Liberation Sans',sans-serif;transform:scaleX(1.0163);">pDataOut</div>
<div class="t" style="left:519.7px;top:476.83px;font-size:10px;line-height:10px;color:#1e1e1e;font-family:'Liberation Sans',sans-serif;transform:scaleX(0.9618);">0x0000001ea359d8c8 = { cbData = ...</div>
<div class="t" style="left:693.5px;top:476.83px;font-size:10px;line-height:10px;color:#e03030;font-family:'Liberation Sans',sans-serif;transform:scaleX(0.9618);">0x0000001ea359d8c8 = { cbData = ...</div>
<svg style="left:945px;top:290px" width="13" height="13" viewBox="0 0 13 13"><defs><linearGradient id="fg" x1="0" y1="0" x2="1" y2="1"><stop offset="0" stop-color="#5a5ad0"/><stop offset="1" stop-color="#3a3aa0"/></linearGradient></defs><rect x=".5" y=".5" width="12" height="12" fill="url(#fg)" stroke="#3030a0" stroke-width=".6"/><rect x="2.9" y="1" width="6.5" height="5.9" fill="#f4f4ff"/><rect x="3.9" y="8.8" width="5.2" height="4.2" fill="#20204a"/><rect x="5.9" y="9.8" width="1.9" height="2.6" fill="#e0e0f0"/></svg>
<svg style="left:964px;top:290px" width="13" height="13" viewBox="0 0 13 13"><rect x=".5" y=".5" width="7" height="9" fill="#f0f0f0" stroke="#b0b0b0" stroke-width=".9"/><rect x="5" y="3.5" width="7.5" height="9" fill="#f0f0f0" stroke="#b0b0b0" stroke-width=".9"/><path d="M6.5 6.5h4.5M6.5 8.5h4.5M6.5 10.5h4.5" stroke="#b0b0b0" stroke-width=".8"/></svg>
<div style="left:985px;top:289px;width:1px;height:16px;background:linear-gradient(transparent,#c4c4c4 20%,#c4c4c4 80%,transparent)"></div>
<svg style="left:990px;top:289.5px" width="14" height="13" viewBox="0 0 14 13"><rect x=".5" y=".5" width="13" height="12" fill="#f0f6ff" stroke="#3a64b0" stroke-width=".9"/><rect x="1" y="1" width="12" height="2" fill="#4a84d8"/><path d="M4 7 a3 3 0 0 1 5-1.5 M10 8 a3 3 0 0 1 -5 1.5" stroke="#40a030" stroke-width="1.4" fill="none"/></svg>
<div style="left:1010px;top:289px;width:1px;height:16px;background:linear-gradient(transparent,#c4c4c4 20%,#c4c4c4 80%,transparent)"></div>
<div style="left:1013px;top:287px;width:19.5px;height:19.5px;background:#d6e9fa;border:1.3px solid #2e7fc8;box-sizing:border-box"></div>
<svg style="left:1015.5px;top:289px" width="5" height="8" viewBox="0 0 5 8"><rect x=".5" y=".5" width="4" height="7" fill="#dde4f0" stroke="#3a4a6a" stroke-width=".8"/><path d="M1.5 3h2M1.5 5h2" stroke="#3a4a6a" stroke-width=".6"/></svg>
<div class="t" style="left:1021.0px;top:295.19px;font-size:11px;line-height:11px;color:#c02828;font-family:'Liberation Sans',sans-serif;font-weight:bold;transform:scaleX(0.9807);">1</div>
<svg style="left:1034.5px;top:289px" width="5" height="8" viewBox="0 0 5 8"><rect x=".5" y=".5" width="4" height="7" fill="#dde4f0" stroke="#3a4a6a" stroke-width=".8"/><path d="M1.5 3h2M1.5 5h2" stroke="#3a4a6a" stroke-width=".6"/></svg>
<div class="t" style="left:1040.0px;top:295.19px;font-size:11px;line-height:11px;color:#c02828;font-family:'Liberation Sans',sans-serif;font-weight:bold;transform:scaleX(0.9807);">2</div>
<svg style="left:1053.5px;top:289px" width="5" height="8" viewBox="0 0 5 8"><rect x=".5" y=".5" width="4" height="7" fill="#dde4f0" stroke="#3a4a6a" stroke-width=".8"/><path d="M1.5 3h2M1.5 5h2" stroke="#3a4a6a" stroke-width=".6"/></svg>
<div class="t" style="left:1059.0px;top:295.19px;font-size:11px;line-height:11px;color:#c02828;font-family:'Liberation Sans',sans-serif;font-weight:bold;transform:scaleX(0.9807);">4</div>
<svg style="left:1072.5px;top:289px" width="5" height="8" viewBox="0 0 5 8"><rect x=".5" y=".5" width="4" height="7" fill="#dde4f0" stroke="#3a4a6a" stroke-width=".8"/><path d="M1.5 3h2M1.5 5h2" stroke="#3a4a6a" stroke-width=".6"/></svg>
<div class="t" style="left:1078.0px;top:295.19px;font-size:11px;line-height:11px;color:#c02828;font-family:'Liberation Sans',sans-serif;font-weight:bold;transform:scaleX(0.9807);">8</div>
<div style="left:1093px;top:289px;width:1px;height:16px;background:linear-gradient(transparent,#c4c4c4 20%,#c4c4c4 80%,transparent)"></div>
<div style="left:1096.4px;top:287px;width:19.6px;height:19.5px;background:#d6e9fa;border:1.3px solid #2e7fc8;box-sizing:border-box"></div>
<div class="t" style="left:1099px;top:290.38px;font-size:9px;line-height:9px;color:#2a5ab0;font-family:'Liberation Sans',sans-serif;transform:scaleX(0.95);">L</div>
<svg style="left:1102px;top:297px" width="11" height="8" viewBox="0 0 11 8"><path d="M0.5 4 L4.5 0.5 V2.5 H10.5 V5.5 H4.5 V7.5z" fill="#3a84e0" stroke="#1a5ab0" stroke-width=".6"/></svg>
<div class="t" style="left:1118px;top:290.38px;font-size:9px;line-height:9px;color:#2a5ab0;font-family:'Liberation Sans',sans-serif;transform:scaleX(0.95);">B</div>
<svg style="left:1122px;top:297px" width="11" height="8" viewBox="0 0 11 8"><path d="M10.5 4 L6.5 0.5 V2.5 H0.5 V5.5 H6.5 V7.5z" fill="#3a84e0" stroke="#1a5ab0" stroke-width=".6"/></svg>
<div class="t" style="left:946.3px;top:313.10px;font-size:9.8px;line-height:9.8px;color:#6a80c8;font-family:'Liberation Sans',sans-serif;transform:scaleX(1.0);letter-spacing:1.05px;">0000</div>
<div class="t" style="left:982.5px;top:313.78px;font-size:9px;line-height:9px;color:#383838;font-family:'Liberation Mono',monospace;font-weight:bold;letter-spacing:0.7px;">00</div>
<div class="t" style="left:1000.7px;top:313.78px;font-size:9px;line-height:9px;color:#383838;font-family:'Liberation Mono',monospace;font-weight:bold;letter-spacing:0.7px;">14</div>
<div class="t" style="left:1018.9px;top:313.78px;font-size:9px;line-height:9px;color:#383838;font-family:'Liberation Mono',monospace;font-weight:bold;letter-spacing:0.7px;">0b</div>
<div class="t" style="left:1037.1px;top:313.78px;font-size:9px;line-height:9px;color:#383838;font-family:'Liberation Mono',monospace;font-weight:bold;letter-spacing:0.7px;">7e</div>
<div class="t" style="left:1055.3px;top:313.78px;font-size:9px;line-height:9px;color:#383838;font-family:'Liberation Mono',monospace;font-weight:bold;letter-spacing:0.7px;">8b</div>
<div class="t" style="left:1073.5px;top:313.78px;font-size:9px;line-height:9px;color:#383838;font-family:'Liberation Mono',monospace;font-weight:bold;letter-spacing:0.7px;">18</div>
<div class="t" style="left:1091.7px;top:313.78px;font-size:9px;line-height:9px;color:#383838;font-family:'Liberation Mono',monospace;font-weight:bold;letter-spacing:0.7px;">8f</div>
<div class="t" style="left:1109.9px;top:313.78px;font-size:9px;line-height:9px;color:#383838;font-family:'Liberation Mono',monospace;font-weight:bold;letter-spacing:0.7px;">7e</div>
<div class="t" style="left:1128.1px;top:313.78px;font-size:9px;line-height:9px;color:#383838;font-family:'Liberation Mono',monospace;font-weight:bold;letter-spacing:0.7px;">c5</div>
<div class="t" style="left:1146.3px;top:313.78px;font-size:9px;line-height:9px;color:#383838;font-family:'Liberation Mono',monospace;font-weight:bold;letter-spacing:0.7px;">f2</div>
<div class="t" style="left:1164.5px;top:313.78px;font-size:9px;line-height:9px;color:#383838;font-family:'Liberation Mono',monospace;font-weight:bold;letter-spacing:0.7px;">2d</div>
<div class="t" style="left:1182.7px;top:313.78px;font-size:9px;line-height:9px;color:#383838;font-family:'Liberation Mono',monospace;font-weight:bold;letter-spacing:0.7px;">6e</div>
<div class="t" style="left:1200.9px;top:313.78px;font-size:9px;line-height:9px;color:#383838;font-family:'Liberation Mono',monospace;font-weight:bold;letter-spacing:0.7px;">db</div>
<div class="t" style="left:1219.1px;top:313.78px;font-size:9px;line-height:9px;color:#383838;font-family:'Liberation Mono',monospace;font-weight:bold;letter-spacing:0.7px;">95</div>
<div class="t" style="left:1237.3px;top:313.78px;font-size:9px;line-height:9px;color:#383838;font-family:'Liberation Mono',monospace;font-weight:bold;letter-spacing:0.7px;">b8</div>
<div class="t" style="left:1255.5px;top:313.78px;font-size:9px;line-height:9px;color:#383838;font-family:'Liberation Mono',monospace;font-weight:bold;letter-spacing:0.7px;">5b</div>
<svg style="left:236px;top:253.5px" width="5" height="8" viewBox="0 0 5 8"><path d="M4.5 0.5 L1 4 L4.5 7.5" stroke="#555" stroke-width="1.3" fill="none"/></svg>
<svg style="left:455px;top:253.5px" width="5" height="8" viewBox="0 0 5 8"><path d="M0.5 0.5 L4 4 L0.5 7.5" stroke="#555" stroke-width="1.3" fill="none"/></svg>
<svg style="left:2px;top:3.5px" width="13" height="14" viewBox="0 0 13 14"><path d="M3.5 3.5 q0-2.5 3.5-2.5 q3 0 3 2.5 l1 0.5 q-0.5 1-4.5 1 q-4 0-4.5-1z" fill="#4a4040"/><path d="M4 4.8 h5 v3 q-2.5 1.5-5 0z" fill="#b07a60"/><path d="M1.8 8 q1-1.5 3.5-1 h3 q2 0 2.2 2 v5.5 h-8.7z" fill="#5a2a1a"/><rect x="6.3" y="8.5" width="6" height="5" fill="#e8eaf0" stroke="#3a3a4a" stroke-width=".8"/><rect x="7.5" y="10" width="3.5" height="2.5" fill="#6a6a8a"/></svg>
</body></html>
